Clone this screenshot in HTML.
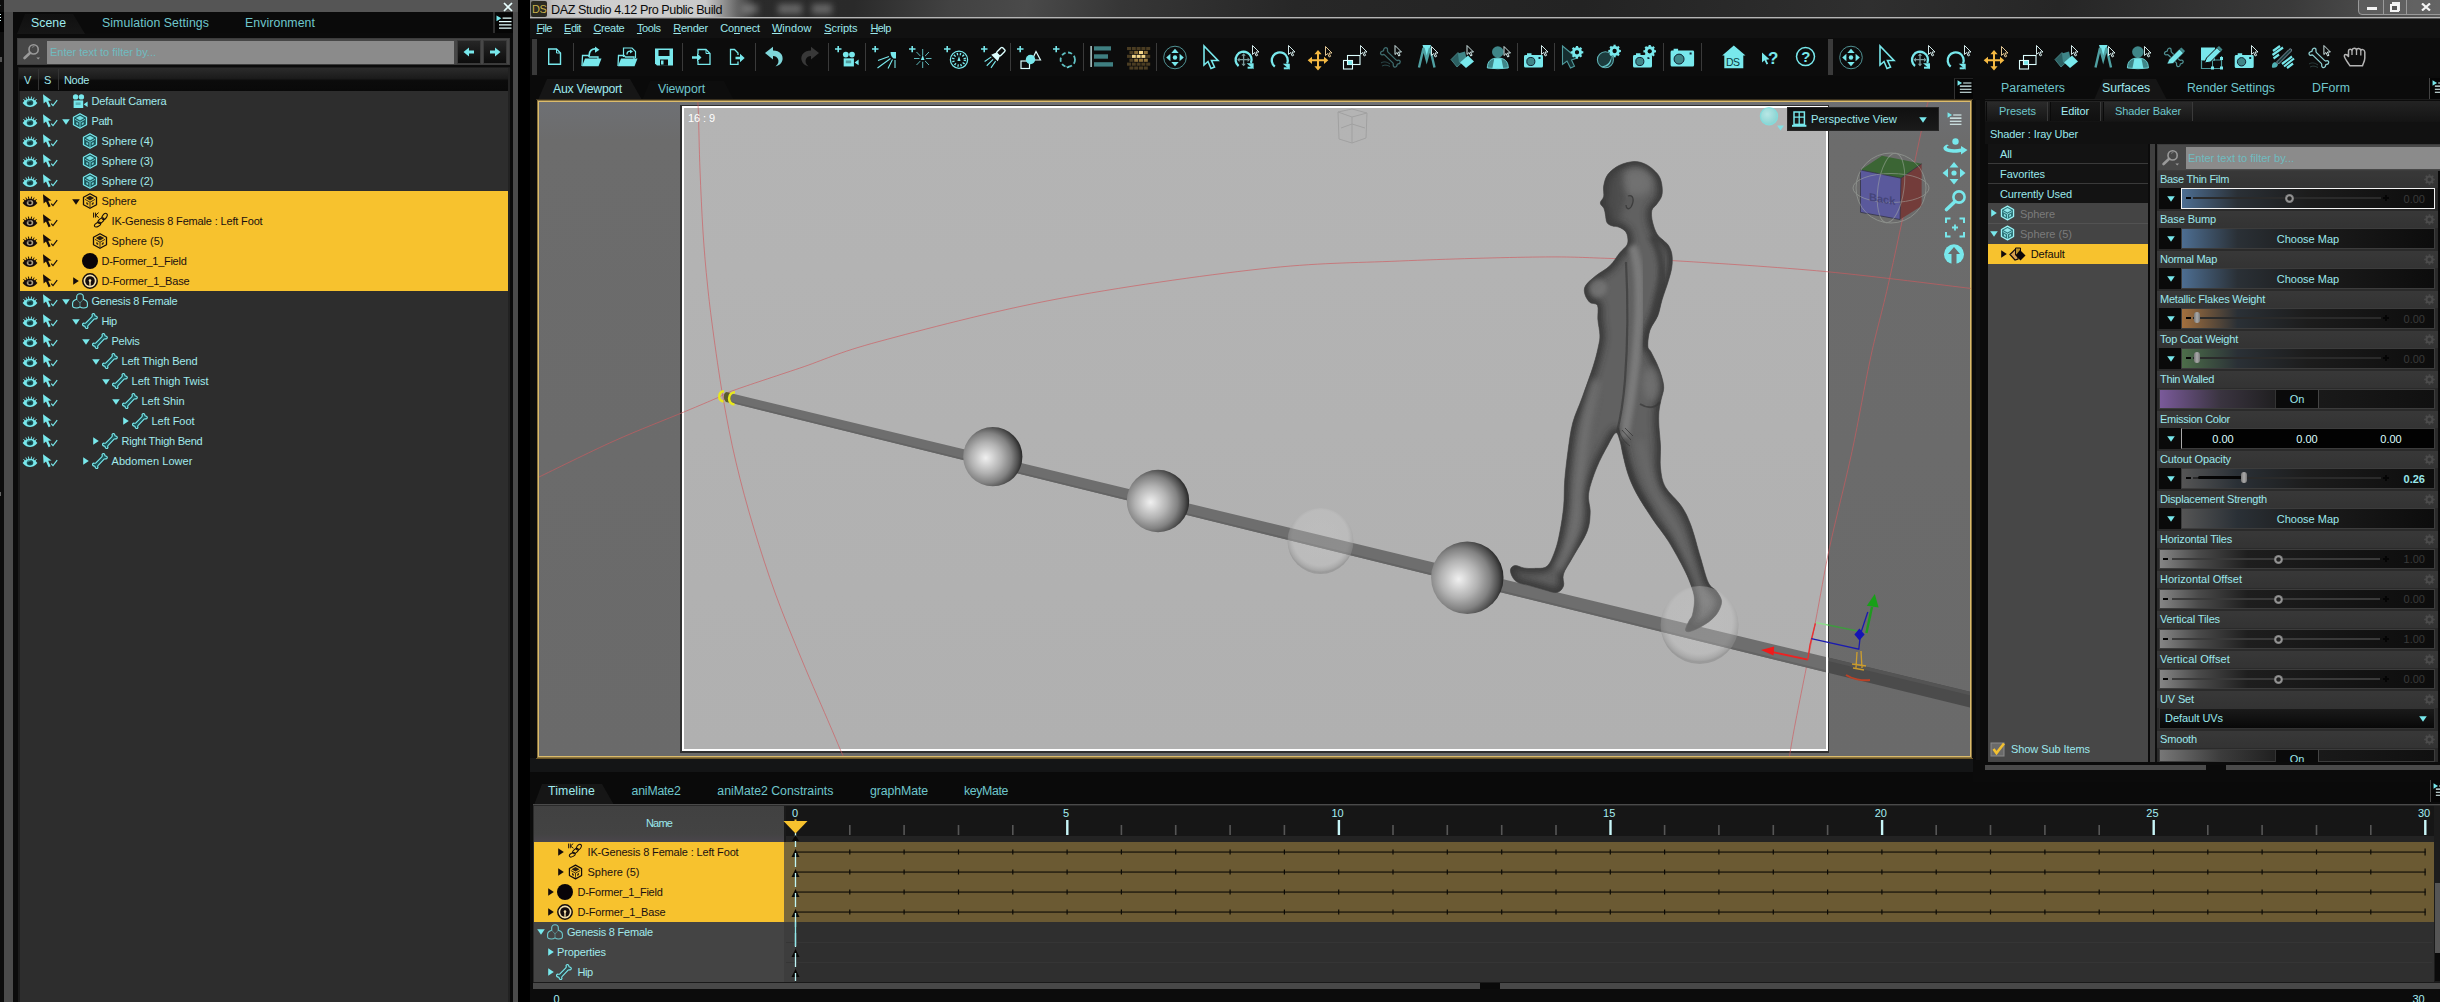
<!DOCTYPE html><html><head><meta charset="utf-8"><title>DAZ Studio</title><style>
html,body{margin:0;padding:0;background:#0a0a0a}
body{width:2440px;height:1002px;position:relative;overflow:hidden;font-family:"Liberation Sans",sans-serif;}
body div,body svg{position:absolute;}
.t{white-space:nowrap;}
u{text-decoration:underline;text-underline-offset:1px}
</style></head><body>

<svg width="0" height="0" style="position:absolute"><defs>
<symbol id="eye" viewBox="0 0 16 12" overflow="visible">
 <g stroke="currentColor" stroke-width="1" fill="none" stroke-linecap="butt">
  <path d="M1.2 3.2L2.8 5.2M3.6 1.6L4.8 4M6.3 0.6L6.8 3.3M9.7 0.6L9.2 3.3M12.4 1.6L11.2 4M14.8 3.2L13.2 5.2"/>
 </g>
 <path d="M0.3 7.2C3 3.6 5.6 2.8 8 2.8C10.4 2.8 13 3.6 15.7 7.2C13 10.6 10.4 11.4 8 11.4C5.6 11.4 3 10.6 0.3 7.2Z" fill="currentColor"/>
 <ellipse cx="8" cy="7" rx="3.400" ry="2.900" fill="var(--k)"/>
 <ellipse cx="8" cy="7.100" rx="1.700" ry="1.600" fill="var(--p,transparent)"/>
 <path d="M5.400 6.400a2.400 2 0 0 1 3.200-1.400" stroke="currentColor" stroke-width="0.900" fill="none" opacity=".8"/>
</symbol>
<symbol id="sel" viewBox="0 0 16 14" overflow="visible">
 <path d="M1 0.2L1.6 9.6L4 7.6L6.6 13.2L8.6 12.2L6.2 6.8L9.6 6.4Z" fill="currentColor"/>
 <path d="M9.2 9.6L11 11.6L15.2 6.2" stroke="currentColor" stroke-width="1.2" fill="none"/>
</symbol>
<symbol id="cube" viewBox="0 0 16 16" overflow="visible">
 <path d="M8 0.700L14.500 4.300V11.700L8 15.300L1.500 11.700V4.300Z" fill="var(--k)" stroke="currentColor" stroke-width="1.300" stroke-linejoin="round"/>
 <path d="M8 2.700L12.200 5.100L8 7.500L3.800 5.100Z" fill="currentColor" opacity=".9"/>
 <path d="M3 6.400L8 9.200L13 6.400M8 9.200V14" fill="none" stroke="currentColor" stroke-width="0.900" opacity=".9"/>
 <path d="M4.300 8.900L6.200 10V12.200L4.300 11.100Z M11.700 8.900L9.800 10V12.200L11.700 11.100Z" fill="currentColor" opacity=".85"/>
</symbol>
<symbol id="bone" viewBox="0 0 16 16" overflow="visible">
 <path d="M2.2 10.2C0.8 10 0 11.4 0.9 12.5C1.7 13.4 2.6 13 2.9 13.3C3.3 13.7 2.8 14.6 3.9 15.3C5.1 16 6.3 14.9 5.8 13.7C5.6 13.1 5.6 12.9 6.2 12.3L12.1 6.2C12.6 5.7 13 5.8 13.6 5.9C14.9 6.1 15.8 4.7 14.9 3.6C14.2 2.8 13.4 3.1 13.1 2.8C12.7 2.4 13.1 1.4 12.1 0.8C10.9 0.1 9.7 1.2 10.2 2.4C10.4 3 10.4 3.2 9.8 3.8L3.9 9.9C3.4 10.4 3 10.3 2.2 10.2Z" fill="var(--k)" stroke="currentColor" stroke-width="1.15" stroke-linejoin="round"/>
</symbol>
<symbol id="cam" viewBox="0 0 16 15" overflow="visible">
 <circle cx="3.6" cy="2.9" r="2.7" fill="currentColor"/><circle cx="9.4" cy="2.9" r="2.7" fill="currentColor"/>
 <rect x="1.6" y="6.4" width="9.6" height="7.6" fill="currentColor"/>
 <path d="M11.8 10.2L15.6 7.6V13L11.8 10.4Z" fill="currentColor"/>
 <rect x="3.6" y="8.4" width="5" height="2.6" fill="var(--k)" opacity=".35"/>
</symbol>
<symbol id="fig" viewBox="0 0 16 16" overflow="visible">
 <path d="M8 0.8C10 0.8 11.3 2 11.3 3.8V6.3C13.6 7 15.4 8.6 15.4 10.3V12.8C15.4 14.2 13.4 15 11.6 15C10.1 15 8.8 14.5 8 13.8C7.2 14.5 5.9 15 4.4 15C2.6 15 0.6 14.2 0.6 12.8V10.3C0.6 8.6 2.4 7 4.7 6.3V3.8C4.7 2 6 0.8 8 0.8Z" fill="var(--k)" stroke="currentColor" stroke-width="1.1" stroke-linejoin="round"/>
 <path d="M4.7 6.3C6 7.6 7.2 8.6 8 10.2C8.8 8.6 10 7.6 11.3 6.3M8 10.2V13.8" fill="none" stroke="currentColor" stroke-width="0.8" opacity=".6"/>
</symbol>
<symbol id="dbase" viewBox="0 0 16 16" overflow="visible">
 <circle cx="8" cy="8" r="7.200" fill="#f3dfa8" stroke="currentColor" stroke-width="1.500"/>
 <circle cx="8" cy="8" r="4.800" fill="currentColor"/>
 <circle cx="8" cy="7.600" r="1.300" fill="#f3dfa8"/><path d="M7.300 8V12.700H8.700V8Z" fill="#f3dfa8"/>
</symbol>
<symbol id="ik" viewBox="0 0 16 16" overflow="visible">
 <path d="M0.4 0.6V5.6M2.4 0.6V5.6M5.6 0.6L2.6 3.2L5.8 5.6" stroke="currentColor" stroke-width="1" fill="none"/>
 <ellipse cx="11.6" cy="4.4" rx="2.1" ry="3.4" transform="rotate(35 11.6 4.4)" fill="none" stroke="currentColor" stroke-width="1.1"/>
 <ellipse cx="8" cy="8.6" rx="1.9" ry="3.6" transform="rotate(50 8 8.6)" fill="none" stroke="currentColor" stroke-width="1.1"/>
 <ellipse cx="4.6" cy="12.6" rx="1.9" ry="3.4" transform="rotate(62 4.6 12.6)" fill="none" stroke="currentColor" stroke-width="1.1"/>
</symbol>
<symbol id="td" viewBox="0 0 8 6" overflow="visible"><path d="M0.2 0.2H7.8L4 5.8Z" fill="currentColor"/></symbol>
<symbol id="tr" viewBox="0 0 6 8" overflow="visible"><path d="M0.2 0.2V7.8L5.8 4Z" fill="currentColor"/></symbol>
<symbol id="menu" viewBox="0 0 16 14" overflow="visible">
 <path d="M0.5 0.4L5.4 3.3L0.5 6.2Z" fill="currentColor"/>
 <path d="M6.6 3.2H15.5M3 6.6H15.5M3 9.9H15.5M3 13.2H15.5" stroke="#e6ffff" stroke-width="1.2"/>
</symbol>
<symbol id="mag" viewBox="0 0 18 18" overflow="visible">
 <circle cx="10.6" cy="6.4" r="4.6" fill="none" stroke="#9a9a9a" stroke-width="1.6"/>
 <path d="M7.2 9.8L1.6 15" stroke="#9a9a9a" stroke-width="2.6" stroke-linecap="round"/>
 <path d="M9 4.6a2.4 2.4 0 0 1 2.4-1" stroke="#8a8a8a" stroke-width="0.8" fill="none"/>
 <path d="M13.4 14.6h3.6l-1.8 2z" fill="#9a9a9a"/>
</symbol>
<symbol id="gear" viewBox="0 0 12 12" overflow="visible">
 <circle cx="6" cy="6" r="3.3" fill="none" stroke="currentColor" stroke-width="2.2"/>
 <path d="M6 0.2V2M6 10V11.8M0.2 6H2M10 6H11.8M1.9 1.9L3.2 3.2M8.8 8.8L10.1 10.1M1.9 10.1L3.2 8.8M8.8 3.2L10.1 1.9" stroke="currentColor" stroke-width="1.8"/>
</symbol>
</defs></svg>
<div style="left:0px;top:0px;width:530px;height:1002px;background:#0a0a0a;"></div>
<div style="left:0px;top:0px;width:4px;height:1002px;background:#0c0c0c;"></div>
<div style="left:4px;top:0px;width:514px;height:1002px;background:#4b4b4b;"></div>
<div style="left:4px;top:0px;width:514px;height:12px;background:#555555;"></div>
<div style="left:518px;top:0px;width:12px;height:1002px;background:#000;"></div>
<div style="left:0px;top:12px;width:4px;height:20px;background:#000;"></div>
<svg style="left:-5px;top:-1px" width="10" height="12"><path d="M0 0L8 8M8 0L0 8" stroke="#dff" stroke-width="1.6" transform="translate(-3,-1)"/></svg>
<div style="left:0px;top:14px;width:1px;height:1px;background:#dff;"></div>
<div style="left:0px;top:17px;width:1px;height:1px;background:#dff;"></div>
<div style="left:0px;top:20px;width:1px;height:1px;background:#dff;"></div>
<div style="left:0px;top:57px;width:2px;height:5px;background:#555;"></div>
<div style="left:0px;top:492px;width:1px;height:4px;background:#666;"></div>
<div style="left:13px;top:12px;width:500px;height:990px;background:#0b0b0b;"></div>
<div style="left:13px;top:12px;width:481px;height:21px;background:#0a0a0a;"></div>
<svg style="left:13px;top:12px" width="110" height="22"><defs><linearGradient id="tabg" x1="0" y1="0" x2="0" y2="1"><stop offset="0" stop-color="#101010"/><stop offset="1" stop-color="#161616"/></linearGradient></defs><path d="M4 22L12 2H60L72 22Z" fill="url(#tabg)"/><path d="M80 22L88 2H210" fill="none"/></svg>
<div class="t" style="left:31px;top:14.8px;font-size:12.3px;color:#9eeaee;line-height:16px;letter-spacing:0.025px;">Scene</div>
<div class="t" style="left:102px;top:14.8px;font-size:12.3px;color:#6fc7cc;line-height:16px;letter-spacing:0.091px;">Simulation Settings</div>
<div class="t" style="left:245px;top:14.8px;font-size:12.3px;color:#6fc7cc;line-height:16px;letter-spacing:0.087px;">Environment</div>
<svg style="left:503px;top:2px" width="10" height="10"><path d="M1 1L9 9M9 1L1 9" stroke="#e8ffff" stroke-width="1.7"/></svg>
<div style="left:493px;top:12px;width:2px;height:21px;background:#2e2e2e;"></div>
<div style="left:495px;top:13px;width:18px;height:20px;background:#050505;"></div>
<svg style="left:496px;top:15px;color:#78e8ec;" width="16" height="14"><use href="#menu"/></svg>
<div style="left:17px;top:38px;width:493px;height:27px;background:#3c3c3c;"></div>
<div style="left:18px;top:39px;width:491px;height:25px;background:#474747;"></div>
<div style="left:47px;top:41px;width:407px;height:23px;background:#8b8b8b;"></div>
<svg style="left:23px;top:43px;color:#78e8ec;" width="18" height="18"><use href="#mag"/></svg>
<div class="t" style="left:50px;top:44.0px;font-size:11px;color:#6fbcc0;line-height:16px;letter-spacing:-0.007px;">Enter text to filter by...</div>
<div style="left:457px;top:40px;width:24px;height:24px;background:linear-gradient(#262626,#0c0c0c);border:1px solid #3a3a3a;box-sizing:border-box;"></div>
<div style="left:483px;top:40px;width:24px;height:24px;background:linear-gradient(#262626,#0c0c0c);border:1px solid #3a3a3a;box-sizing:border-box;"></div>
<svg style="left:463px;top:46px" width="12" height="12"><path d="M0.5 6L6 1.6V4.6H11V7.4H6V10.4Z" fill="#78e8ec"/></svg>
<svg style="left:489px;top:46px" width="12" height="12"><path d="M11.5 6L6 1.6V4.6H1V7.4H6V10.4Z" fill="#78e8ec"/></svg>
<div style="left:18px;top:67px;width:492px;height:935px;background:#1c1c1c;"></div>
<div style="left:19px;top:68px;width:490px;height:23px;background:linear-gradient(#2b2b2b 0%,#1b1b1b 45%,#0b0b0b 55%,#090909 100%);"></div>
<div style="left:38px;top:69px;width:1px;height:21px;background:#333;"></div>
<div style="left:58px;top:69px;width:1px;height:21px;background:#333;"></div>
<div class="t" style="left:24px;top:72.0px;font-size:11px;color:#a2eaec;line-height:16px;">V</div>
<div class="t" style="left:44px;top:72.0px;font-size:11px;color:#a2eaec;line-height:16px;">S</div>
<div class="t" style="left:64px;top:72.0px;font-size:11px;color:#a2eaec;line-height:16px;letter-spacing:-0.324px;">Node</div>
<div style="left:20px;top:91px;width:488px;height:911px;background:#2d2d2d;"></div>
<div style="left:508px;top:68px;width:2px;height:934px;background:#222;"></div>
<div style="left:20px;top:191px;width:488px;height:100px;background:#f7c22e;"></div>
<svg style="left:22px;top:95.5px;color:#78e8ec;--k:#1c4f53;--p:#0e3538;" width="16" height="11.5"><use href="#eye"/></svg>
<svg style="left:42px;top:94px;color:#78e8ec;--k:#1c4f53;" width="16" height="14"><use href="#sel"/></svg>
<svg style="left:72px;top:94px;color:#78e8ec;--k:#1c4f53;" width="16" height="15"><use href="#cam"/></svg>
<div class="t" style="left:91.5px;top:93.0px;font-size:11px;color:#a2eaec;line-height:16px;letter-spacing:-0.146px;">Default Camera</div>
<svg style="left:22px;top:115.5px;color:#78e8ec;--k:#1c4f53;--p:#0e3538;" width="16" height="11.5"><use href="#eye"/></svg>
<svg style="left:42px;top:114px;color:#78e8ec;--k:#1c4f53;" width="16" height="14"><use href="#sel"/></svg>
<svg style="left:62px;top:119px;color:#78e8ec;" width="8" height="6"><use href="#td"/></svg>
<svg style="left:72px;top:113px;color:#78e8ec;--k:#1d5357;" width="16" height="16"><use href="#cube"/></svg>
<div class="t" style="left:91.5px;top:113.0px;font-size:11px;color:#a2eaec;line-height:16px;letter-spacing:-0.410px;">Path</div>
<svg style="left:22px;top:135.5px;color:#78e8ec;--k:#1c4f53;--p:#0e3538;" width="16" height="11.5"><use href="#eye"/></svg>
<svg style="left:42px;top:134px;color:#78e8ec;--k:#1c4f53;" width="16" height="14"><use href="#sel"/></svg>
<svg style="left:82px;top:133px;color:#78e8ec;--k:#1d5357;" width="16" height="16"><use href="#cube"/></svg>
<div class="t" style="left:101.5px;top:133.0px;font-size:11px;color:#a2eaec;line-height:16px;letter-spacing:0.002px;">Sphere (4)</div>
<svg style="left:22px;top:155.5px;color:#78e8ec;--k:#1c4f53;--p:#0e3538;" width="16" height="11.5"><use href="#eye"/></svg>
<svg style="left:42px;top:154px;color:#78e8ec;--k:#1c4f53;" width="16" height="14"><use href="#sel"/></svg>
<svg style="left:82px;top:153px;color:#78e8ec;--k:#1d5357;" width="16" height="16"><use href="#cube"/></svg>
<div class="t" style="left:101.5px;top:153.0px;font-size:11px;color:#a2eaec;line-height:16px;letter-spacing:0.002px;">Sphere (3)</div>
<svg style="left:22px;top:175.5px;color:#78e8ec;--k:#1c4f53;--p:#0e3538;" width="16" height="11.5"><use href="#eye"/></svg>
<svg style="left:42px;top:174px;color:#78e8ec;--k:#1c4f53;" width="16" height="14"><use href="#sel"/></svg>
<svg style="left:82px;top:173px;color:#78e8ec;--k:#1d5357;" width="16" height="16"><use href="#cube"/></svg>
<div class="t" style="left:101.5px;top:173.0px;font-size:11px;color:#a2eaec;line-height:16px;letter-spacing:0.002px;">Sphere (2)</div>
<svg style="left:22px;top:195.5px;color:#140c0c;--k:#a89c84;--p:#0c0808;" width="16" height="11.5"><use href="#eye"/></svg>
<svg style="left:42px;top:194px;color:#140c0c;--k:#f7c22e;" width="16" height="14"><use href="#sel"/></svg>
<svg style="left:72px;top:199px;color:#140c0c;" width="8" height="6"><use href="#td"/></svg>
<svg style="left:82px;top:193px;color:#140c0c;--k:#f7c22e;" width="16" height="16"><use href="#cube"/></svg>
<div class="t" style="left:101.5px;top:193.0px;font-size:11px;color:#1a1010;line-height:16px;letter-spacing:-0.081px;">Sphere</div>
<svg style="left:22px;top:215.5px;color:#140c0c;--k:#a89c84;--p:#0c0808;" width="16" height="11.5"><use href="#eye"/></svg>
<svg style="left:42px;top:214px;color:#140c0c;--k:#f7c22e;" width="16" height="14"><use href="#sel"/></svg>
<svg style="left:93px;top:212px;color:#140c0c;--k:#f7c22e;" width="16" height="16"><use href="#ik"/></svg>
<div class="t" style="left:111.5px;top:213.0px;font-size:11px;color:#1a1010;line-height:16px;letter-spacing:-0.158px;">IK-Genesis 8 Female : Left Foot</div>
<svg style="left:22px;top:235.5px;color:#140c0c;--k:#a89c84;--p:#0c0808;" width="16" height="11.5"><use href="#eye"/></svg>
<svg style="left:42px;top:234px;color:#140c0c;--k:#f7c22e;" width="16" height="14"><use href="#sel"/></svg>
<svg style="left:92px;top:233px;color:#140c0c;--k:#f7c22e;" width="16" height="16"><use href="#cube"/></svg>
<div class="t" style="left:111.5px;top:233.0px;font-size:11px;color:#1a1010;line-height:16px;letter-spacing:0.002px;">Sphere (5)</div>
<svg style="left:22px;top:255.5px;color:#140c0c;--k:#a89c84;--p:#0c0808;" width="16" height="11.5"><use href="#eye"/></svg>
<svg style="left:42px;top:254px;color:#140c0c;--k:#f7c22e;" width="16" height="14"><use href="#sel"/></svg>
<div style="left:82px;top:253px;width:16px;height:16px;border-radius:8px;background:#080408"></div>
<div class="t" style="left:101.5px;top:253.0px;font-size:11px;color:#1a1010;line-height:16px;letter-spacing:-0.266px;">D-Former_1_Field</div>
<svg style="left:22px;top:275.5px;color:#140c0c;--k:#a89c84;--p:#0c0808;" width="16" height="11.5"><use href="#eye"/></svg>
<svg style="left:42px;top:274px;color:#140c0c;--k:#f7c22e;" width="16" height="14"><use href="#sel"/></svg>
<svg style="left:73px;top:277px;color:#140c0c;" width="6" height="8"><use href="#tr"/></svg>
<svg style="left:82px;top:273px;color:#140c0c;--k:#f7c22e;" width="16" height="16"><use href="#dbase"/></svg>
<div class="t" style="left:101.5px;top:273.0px;font-size:11px;color:#1a1010;line-height:16px;letter-spacing:-0.166px;">D-Former_1_Base</div>
<svg style="left:22px;top:295.5px;color:#78e8ec;--k:#1c4f53;--p:#0e3538;" width="16" height="11.5"><use href="#eye"/></svg>
<svg style="left:42px;top:294px;color:#78e8ec;--k:#1c4f53;" width="16" height="14"><use href="#sel"/></svg>
<svg style="left:62px;top:299px;color:#78e8ec;" width="8" height="6"><use href="#td"/></svg>
<svg style="left:72px;top:293px;color:#78e8ec;--k:#2d2d2d;" width="16" height="16"><use href="#fig"/></svg>
<div class="t" style="left:91.5px;top:293.0px;font-size:11px;color:#a2eaec;line-height:16px;letter-spacing:-0.204px;">Genesis 8 Female</div>
<svg style="left:22px;top:315.5px;color:#78e8ec;--k:#1c4f53;--p:#0e3538;" width="16" height="11.5"><use href="#eye"/></svg>
<svg style="left:42px;top:314px;color:#78e8ec;--k:#1c4f53;" width="16" height="14"><use href="#sel"/></svg>
<svg style="left:72px;top:319px;color:#78e8ec;" width="8" height="6"><use href="#td"/></svg>
<svg style="left:82px;top:313px;color:#78e8ec;--k:#1c4f53;" width="16" height="16"><use href="#bone"/></svg>
<div class="t" style="left:101.5px;top:313.0px;font-size:11px;color:#a2eaec;line-height:16px;letter-spacing:-0.505px;">Hip</div>
<svg style="left:22px;top:335.5px;color:#78e8ec;--k:#1c4f53;--p:#0e3538;" width="16" height="11.5"><use href="#eye"/></svg>
<svg style="left:42px;top:334px;color:#78e8ec;--k:#1c4f53;" width="16" height="14"><use href="#sel"/></svg>
<svg style="left:82px;top:339px;color:#78e8ec;" width="8" height="6"><use href="#td"/></svg>
<svg style="left:92px;top:333px;color:#78e8ec;--k:#1c4f53;" width="16" height="16"><use href="#bone"/></svg>
<div class="t" style="left:111.5px;top:333.0px;font-size:11px;color:#a2eaec;line-height:16px;letter-spacing:-0.224px;">Pelvis</div>
<svg style="left:22px;top:355.5px;color:#78e8ec;--k:#1c4f53;--p:#0e3538;" width="16" height="11.5"><use href="#eye"/></svg>
<svg style="left:42px;top:354px;color:#78e8ec;--k:#1c4f53;" width="16" height="14"><use href="#sel"/></svg>
<svg style="left:92px;top:359px;color:#78e8ec;" width="8" height="6"><use href="#td"/></svg>
<svg style="left:102px;top:353px;color:#78e8ec;--k:#1c4f53;" width="16" height="16"><use href="#bone"/></svg>
<div class="t" style="left:121.5px;top:353.0px;font-size:11px;color:#a2eaec;line-height:16px;letter-spacing:-0.098px;">Left Thigh Bend</div>
<svg style="left:22px;top:375.5px;color:#78e8ec;--k:#1c4f53;--p:#0e3538;" width="16" height="11.5"><use href="#eye"/></svg>
<svg style="left:42px;top:374px;color:#78e8ec;--k:#1c4f53;" width="16" height="14"><use href="#sel"/></svg>
<svg style="left:102px;top:379px;color:#78e8ec;" width="8" height="6"><use href="#td"/></svg>
<svg style="left:112px;top:373px;color:#78e8ec;--k:#1c4f53;" width="16" height="16"><use href="#bone"/></svg>
<div class="t" style="left:131.5px;top:373.0px;font-size:11px;color:#a2eaec;line-height:16px;letter-spacing:0.022px;">Left Thigh Twist</div>
<svg style="left:22px;top:395.5px;color:#78e8ec;--k:#1c4f53;--p:#0e3538;" width="16" height="11.5"><use href="#eye"/></svg>
<svg style="left:42px;top:394px;color:#78e8ec;--k:#1c4f53;" width="16" height="14"><use href="#sel"/></svg>
<svg style="left:112px;top:399px;color:#78e8ec;" width="8" height="6"><use href="#td"/></svg>
<svg style="left:122px;top:393px;color:#78e8ec;--k:#1c4f53;" width="16" height="16"><use href="#bone"/></svg>
<div class="t" style="left:141.5px;top:393.0px;font-size:11px;color:#a2eaec;line-height:16px;letter-spacing:-0.047px;">Left Shin</div>
<svg style="left:22px;top:415.5px;color:#78e8ec;--k:#1c4f53;--p:#0e3538;" width="16" height="11.5"><use href="#eye"/></svg>
<svg style="left:42px;top:414px;color:#78e8ec;--k:#1c4f53;" width="16" height="14"><use href="#sel"/></svg>
<svg style="left:123px;top:417px;color:#78e8ec;" width="6" height="8"><use href="#tr"/></svg>
<svg style="left:132px;top:413px;color:#78e8ec;--k:#1c4f53;" width="16" height="16"><use href="#bone"/></svg>
<div class="t" style="left:151.5px;top:413.0px;font-size:11px;color:#a2eaec;line-height:16px;letter-spacing:-0.047px;">Left Foot</div>
<svg style="left:22px;top:435.5px;color:#78e8ec;--k:#1c4f53;--p:#0e3538;" width="16" height="11.5"><use href="#eye"/></svg>
<svg style="left:42px;top:434px;color:#78e8ec;--k:#1c4f53;" width="16" height="14"><use href="#sel"/></svg>
<svg style="left:93px;top:437px;color:#78e8ec;" width="6" height="8"><use href="#tr"/></svg>
<svg style="left:102px;top:433px;color:#78e8ec;--k:#1c4f53;" width="16" height="16"><use href="#bone"/></svg>
<div class="t" style="left:121.5px;top:433.0px;font-size:11px;color:#a2eaec;line-height:16px;letter-spacing:-0.238px;">Right Thigh Bend</div>
<svg style="left:22px;top:455.5px;color:#78e8ec;--k:#1c4f53;--p:#0e3538;" width="16" height="11.5"><use href="#eye"/></svg>
<svg style="left:42px;top:454px;color:#78e8ec;--k:#1c4f53;" width="16" height="14"><use href="#sel"/></svg>
<svg style="left:83px;top:457px;color:#78e8ec;" width="6" height="8"><use href="#tr"/></svg>
<svg style="left:92px;top:453px;color:#78e8ec;--k:#1c4f53;" width="16" height="16"><use href="#bone"/></svg>
<div class="t" style="left:111.5px;top:453.0px;font-size:11px;color:#a2eaec;line-height:16px;letter-spacing:0.069px;">Abdomen Lower</div>
<div style="left:530px;top:0px;width:1910px;height:1002px;background:#0b0b0b;"></div>
<div style="left:530px;top:0px;width:1910px;height:17px;background:linear-gradient(100deg,#3c3c3c 0%,#2b2b2b 11%,#2a2a2a 17%,#424242 22%,#4a4a4a 26%,#363636 31%,#272727 40%,#232323 55%,#2f2f2f 70%,#262626 80%,#3a3a3a 92%,#5a5a5a 100%);"></div>
<div style="left:530px;top:0px;width:225px;height:17px;background:linear-gradient(90deg,rgba(140,140,140,.85) 0%,rgba(200,200,200,.95) 10%,rgba(214,214,214,.96) 30%,rgba(210,210,210,.95) 78%,rgba(190,190,190,.5) 90%,rgba(150,150,150,0) 100%);"></div>
<div style="left:530px;top:17px;width:1910px;height:1px;background:#b5b5b5;"></div>
<div style="left:530px;top:18px;width:1910px;height:1px;background:#555;"></div>
<div style="left:742px;top:4px;width:16px;height:10px;background:rgba(190,190,190,.4);filter:blur(3px);"></div>
<div style="left:778px;top:4px;width:24px;height:10px;background:rgba(190,190,190,.4);filter:blur(3px);"></div>
<div style="left:812px;top:4px;width:20px;height:10px;background:rgba(190,190,190,.4);filter:blur(3px);"></div>
<div style="left:531px;top:1px;width:16px;height:16px;background:#2a2a22;border-radius:2px;"></div>
<div class="t" style="left:532px;top:1.0px;font-size:11px;color:#c8b24a;line-height:16px;letter-spacing:-0.5px;font-weight:normal;">DS</div>
<div class="t" style="left:551px;top:1.5px;font-size:12.6px;color:#0a0a0a;line-height:16px;letter-spacing:-0.432px;">DAZ Studio 4.12 Pro Public Build</div>
<div style="left:2358px;top:-3px;width:90px;height:18px;border:1px solid #9a9a9a;border-radius:4px;box-sizing:border-box;background:rgba(110,110,110,.55)"></div>
<div style="left:2383px;top:0px;width:1px;height:15px;background:#9a9a9a;"></div>
<div style="left:2406px;top:0px;width:1px;height:15px;background:#9a9a9a;"></div>
<div style="left:2367px;top:7px;width:10px;height:3px;background:#f4f4f4;"></div>
<div style="left:2392px;top:2px;width:6px;height:6px;border:1px solid #eee;border-top-width:2px;"></div>
<div style="left:2390px;top:4px;width:5px;height:4px;border:2px solid #f4f4f4;background:#555"></div>
<svg style="left:2421px;top:3px" width="10" height="8"><path d="M1 0.5L9 7.5M9 0.5L1 7.5" stroke="#f4f4f4" stroke-width="2.2"/></svg>
<div style="left:530px;top:19px;width:1910px;height:19px;background:#111111;"></div>
<div class="t" style="left:536.4px;top:20.3px;font-size:11px;color:#9ce8ec;line-height:16px;letter-spacing:-0.562px;"><u>F</u>ile</div>
<div class="t" style="left:564.1px;top:20.3px;font-size:11px;color:#9ce8ec;line-height:16px;letter-spacing:-0.542px;"><u>E</u>dit</div>
<div class="t" style="left:593.4px;top:20.3px;font-size:11px;color:#9ce8ec;line-height:16px;letter-spacing:-0.339px;"><u>C</u>reate</div>
<div class="t" style="left:636.9px;top:20.3px;font-size:11px;color:#9ce8ec;line-height:16px;letter-spacing:-0.417px;"><u>T</u>ools</div>
<div class="t" style="left:673.3px;top:20.3px;font-size:11px;color:#9ce8ec;line-height:16px;letter-spacing:-0.266px;"><u>R</u>ender</div>
<div class="t" style="left:720.3px;top:20.3px;font-size:11px;color:#9ce8ec;line-height:16px;letter-spacing:-0.183px;">Co<u>n</u>nect</div>
<div class="t" style="left:771.9px;top:20.3px;font-size:11px;color:#9ce8ec;line-height:16px;letter-spacing:0.060px;"><u>W</u>indow</div>
<div class="t" style="left:824.2px;top:20.3px;font-size:11px;color:#9ce8ec;line-height:16px;letter-spacing:-0.032px;"><u>S</u>cripts</div>
<div class="t" style="left:870.4px;top:20.3px;font-size:11px;color:#9ce8ec;line-height:16px;letter-spacing:-0.585px;"><u>H</u>elp</div>
<div style="left:530px;top:38px;width:1910px;height:38px;background:#0c0c0c;"></div>
<div style="left:532px;top:39px;width:5px;height:36px;background:#3a3a3a;"></div>
<div style="left:1828px;top:39px;width:5px;height:36px;background:#3a3a3a;"></div>
<div style="left:573px;top:43px;width:1px;height:28px;background:#3a3a3a;"></div>
<div style="left:682px;top:43px;width:1px;height:28px;background:#3a3a3a;"></div>
<div style="left:755px;top:43px;width:1px;height:28px;background:#3a3a3a;"></div>
<div style="left:828px;top:43px;width:1px;height:28px;background:#3a3a3a;"></div>
<div style="left:865px;top:43px;width:1px;height:28px;background:#3a3a3a;"></div>
<div style="left:1010px;top:43px;width:1px;height:28px;background:#3a3a3a;"></div>
<div style="left:1083px;top:43px;width:1px;height:28px;background:#3a3a3a;"></div>
<div style="left:1156px;top:43px;width:1px;height:28px;background:#3a3a3a;"></div>
<div style="left:1517px;top:43px;width:1px;height:28px;background:#3a3a3a;"></div>
<div style="left:1554px;top:43px;width:1px;height:28px;background:#3a3a3a;"></div>
<div style="left:1663px;top:43px;width:1px;height:28px;background:#3a3a3a;"></div>
<div style="left:1701px;top:43px;width:1px;height:28px;background:#3a3a3a;"></div>
<div style="left:530px;top:76px;width:1455px;height:24px;background:#0a0a0a;"></div>
<svg style="left:538px;top:77px" width="260" height="23"><path d="M0 23L9 2H92L104 23Z" fill="#161616"/><path d="M104 23L112 4H186L196 23Z" fill="#0d0d0d"/></svg>
<div class="t" style="left:553px;top:80.7px;font-size:12.3px;color:#9eeaee;line-height:16px;letter-spacing:-0.270px;">Aux Viewport</div>
<div class="t" style="left:658px;top:80.7px;font-size:12.3px;color:#6fc7cc;line-height:16px;letter-spacing:-0.078px;">Viewport</div>
<div style="left:1954px;top:78px;width:20px;height:21px;background:#050505;border-left:1px solid #333;border-top:1px solid #222;"></div>
<svg style="left:1957px;top:80px;color:#78e8ec;" width="15" height="13"><use href="#menu"/></svg>
<div style="left:530px;top:758px;width:1444px;height:14px;background:#141516;"></div>
<div style="left:530px;top:772px;width:1910px;height:10px;background:#0a0a0a;"></div>
<svg style="left:530px;top:38px" width="1910" height="38" viewBox="530 38 1910 38"><path d="M548.700 49H556.500L560.500 53V64.300H548.700Z" fill="none" stroke="#78e8ec" stroke-width="1.400"/><path d="M556.500 49V53H560.500" fill="none" stroke="#78e8ec" stroke-width="1"/><path d="M582 66L582.5 55.5H588L589.5 57H598V59" fill="none" stroke="#78e8ec" stroke-width="1.300"/><path d="M582 66.300L585 58.500H601.5L598.5 66.300Z" fill="#78e8ec"/><path d="M589 56C589 51 592 48.500 596 49" fill="none" stroke="#78e8ec" stroke-width="1.800"/><path d="M595 46.500L599.500 49.800L595 52.800Z" fill="#78e8ec"/><path d="M618 66L618.5 55.5H624L625.5 57H634V59" fill="none" stroke="#78e8ec" stroke-width="1.300"/><path d="M618 66.300L621 58.500H637.5L634.5 66.300Z" fill="#78e8ec"/><path d="M623.500 57V48H632L635.500 51.500V58" fill="none" stroke="#78e8ec" stroke-width="1.200"/><path d="M627 54.500C627 52 628.500 51 630.500 51.200" fill="none" stroke="#78e8ec" stroke-width="1.400"/><path d="M630 49.500L633 51.500L630 53.500Z" fill="#78e8ec"/><path d="M655 48.500H673V65.600H657L655 63.600Z" fill="#78e8ec"/><rect x="658.500" y="50" width="11" height="6" fill="#0c0c0c"/><rect x="660" y="59.500" width="8" height="6.200" fill="#0c0c0c"/><rect x="661" y="60.500" width="2.500" height="4" fill="#78e8ec"/><path d="M698 54V49.500H706L710 53.500V64.300H698V61" fill="none" stroke="#78e8ec" stroke-width="1.300"/><path d="M706 49.500V53.500H710" fill="none" stroke="#78e8ec" stroke-width="1"/><path d="M692 56.300H697V53.300L701.500 57.500L697 61.700V58.700H692Z" fill="#78e8ec"/><path d="M738 55V53L734.500 49.500H730.500V64.300H738V61.500" fill="none" stroke="#78e8ec" stroke-width="1.300"/><path d="M735.500 56.800H740V53.800L744.700 58L740 62.200V59.200H735.500Z" fill="#78e8ec"/><path d="M765 53L773 46.800V50.500C780 50.500 783.500 55 782.500 60C781.800 63.500 779 65.500 775.500 66.400C778.500 64 779 61.500 778 59C777 57 775.500 56 773 56V59.500Z" fill="#7fd6da"/><path d="M819 53L811 46.800V50.500C804 50.500 800.500 55 801.500 60C802.200 63.500 805 65.500 808.500 66.400C805.500 64 805 61.500 806 59C807 57 808.500 56 811 56V59.500Z" fill="#383838"/><path d="M835 49H841.5M838.2 46V52.2" stroke="#78e8ec" stroke-width="1.600"/><g transform="translate(841.500,51.500)" style="color:#78e8ec;--k:#0c0c0c"><use href="#cam" width="18" height="16"/></g><path d="M872 49H878.5M875.2 46V52.2" stroke="#78e8ec" stroke-width="1.600"/><path d="M890.500 52H896V58.500H893.500Q890.500 56 890.500 52Z" fill="#78e8ec"/><path d="M889 56.500L878 60.500M890.500 58.500L877.500 68M892.500 59.500L888 68.500M895 60V68" stroke="#78e8ec" stroke-width="1.100"/><path d="M909 49H915.5M912.2 46V52.2" stroke="#78e8ec" stroke-width="1.600"/><path d="M922.700 49V68M914 58.500H931.500M916.500 52L929 65M929 52L916.500 65" stroke="#5fb8bb" stroke-width="1"/><circle cx="922.700" cy="58.500" r="3.200" fill="#0c0c0c"/><path d="M922.700 55l1.800 5h-3.600z" fill="#78e8ec"/><path d="M944 49H950.5M947.2 46V52.2" stroke="#78e8ec" stroke-width="1.600"/><circle cx="959" cy="59.700" r="8.600" fill="none" stroke="#78e8ec" stroke-width="1.300"/><circle cx="959" cy="59.700" r="5.800" fill="none" stroke="#78e8ec" stroke-width="2.400" stroke-dasharray="1.300 1.750"/><path d="M959 56l1.600 5h-3.200z" fill="#78e8ec"/><path d="M981 49H987.5M984.2 46V52.2" stroke="#78e8ec" stroke-width="1.600"/><g transform="translate(997,55.500) rotate(45)"><rect x="-2.600" y="-9.500" width="5.200" height="8" rx="1.200" fill="none" stroke="#dff" stroke-width="1.400"/><path d="M-2.600 -1.500H2.600L4.600 3.500H-4.600Z" fill="#dff"/><path d="M-3 5L-4.500 13M0 5.500V14.500M3 5L4.500 13" stroke="#78e8ec" stroke-width="1.100"/></g><path d="M1017 49H1023.5M1020.2 46V52.2" stroke="#78e8ec" stroke-width="1.600"/><rect x="1021" y="61" width="8.500" height="7.500" fill="none" stroke="#dff" stroke-width="1.200"/><path d="M1036 51.500L1040.500 60H1032Z" fill="none" stroke="#dff" stroke-width="1.200"/><circle cx="1030.500" cy="59.500" r="4.700" fill="#78e8ec"/><path d="M1053 49H1059.5M1056.2 46V52.2" stroke="#78e8ec" stroke-width="1.600"/><circle cx="1067.800" cy="59.700" r="7.200" fill="none" stroke="#5fc0c3" stroke-width="1.800" stroke-dasharray="4.200 2.600"/><path d="M1067.800 68.500l-1.800 -2h3.600z" fill="#78e8ec"/><rect x="1090.500" y="46" width="1.200" height="21" fill="#dff"/><rect x="1094" y="46.300" width="17" height="4.200" fill="#3f7f81"/><rect x="1094" y="54.300" width="14" height="4.400" fill="#3f7f81"/><rect x="1094" y="62.200" width="19" height="4.400" fill="#3f7f81"/><rect x="1127.0" y="47.0" width="4" height="3.100" fill="#4a3c22"/><rect x="1131.8" y="47.0" width="4" height="3.100" fill="#4a3c22"/><rect x="1136.6" y="47.0" width="4" height="3.100" fill="#4a3c22"/><rect x="1141.4" y="47.0" width="4" height="3.100" fill="#4a3c22"/><rect x="1146.2" y="47.0" width="4" height="3.100" fill="#4a3c22"/><rect x="1129.4" y="50.9" width="4" height="3.100" fill="#4a3c22"/><rect x="1134.2" y="50.9" width="4" height="3.100" fill="#8a6e38"/><rect x="1139.0" y="50.9" width="4" height="3.100" fill="#f3d68a"/><rect x="1143.8" y="50.9" width="4" height="3.100" fill="#8a6e38"/><rect x="1127.0" y="54.8" width="4" height="3.100" fill="#4a3c22"/><rect x="1131.8" y="54.8" width="4" height="3.100" fill="#f3d68a"/><rect x="1136.6" y="54.8" width="4" height="3.100" fill="#f3d68a"/><rect x="1141.4" y="54.8" width="4" height="3.100" fill="#f3d68a"/><rect x="1146.2" y="54.8" width="4" height="3.100" fill="#4a3c22"/><rect x="1129.4" y="58.7" width="4" height="3.100" fill="#4a3c22"/><rect x="1134.2" y="58.7" width="4" height="3.100" fill="#8a6e38"/><rect x="1139.0" y="58.7" width="4" height="3.100" fill="#8a6e38"/><rect x="1143.8" y="58.7" width="4" height="3.100" fill="#8a6e38"/><rect x="1127.0" y="62.6" width="4" height="3.100" fill="#4a3c22"/><rect x="1131.8" y="62.6" width="4" height="3.100" fill="#4a3c22"/><rect x="1136.6" y="62.6" width="4" height="3.100" fill="#4a3c22"/><rect x="1141.4" y="62.6" width="4" height="3.100" fill="#4a3c22"/><rect x="1146.2" y="62.6" width="4" height="3.100" fill="#4a3c22"/><rect x="1129.4" y="66.5" width="4" height="3.100" fill="#4a3c22"/><rect x="1134.2" y="66.5" width="4" height="3.100" fill="#4a3c22"/><rect x="1139.0" y="66.5" width="4" height="3.100" fill="#4a3c22"/><rect x="1143.8" y="66.5" width="4" height="3.100" fill="#4a3c22"/><circle cx="1175" cy="57.5" r="11.300" fill="none" stroke="#4f9092" stroke-width="1"/><circle cx="1175" cy="57.5" r="2.200" fill="#78e8ec"/><path d="M1175 48.7L1178.7 52.9H1171.3ZM1175 66.3L1178.7 62.1H1171.3ZM1166.2 57.5L1170.4 53.8V61.2ZM1183.8 57.5L1179.6 53.8V61.2Z" fill="#78e8ec"/><path transform="translate(1203,45)" d="M1 1V20L5 16.500L8 23.500L11.500 22L8.500 15.500H15Z" fill="#0c0c0c" stroke="#78e8ec" stroke-width="1.600" stroke-linejoin="miter"/><path d="M1238.6 66.0A8 8 0 1 1 1250.8999999999999 63.0" fill="none" stroke="#78e8ec" stroke-width="2.300"/><path d="M1246.6 63.2H1253.6V69.2Z" fill="#78e8ec"/><path d="M1247.6 66.7h5v2h-5z" fill="#78e8ec"/><path d="M1238.1 59.7H1249.1M1243.6 54.2V65.2" stroke="#7a9a9c" stroke-width="1.300"/><path d="M1237.1 59.7l2.500 -2.200v4.400zM1250.1 59.7l-2.500 -2.200v4.400zM1243.6 53.2l-2.200 2.500h4.400zM1243.6 66.2l-2.200 -2.500h4.400z" fill="#7a9a9c"/><path transform="translate(1252,45)" d="M0.500 0.500V9.500L2.600 7.500L4.200 11L5.600 10.300L4 7H7Z" fill="#0c0c0c" stroke="#e6ffff" stroke-width="0.900" stroke-linejoin="miter"/><path d="M1274.8 66.6A8 8 0 1 1 1287.1 63.599999999999994" fill="none" stroke="#78e8ec" stroke-width="2.300"/><path d="M1282.8 63.8H1289.8V69.8Z" fill="#78e8ec"/><path d="M1283.8 67.3h5v2h-5z" fill="#78e8ec"/><path transform="translate(1288,45)" d="M0.500 0.500V9.500L2.600 7.500L4.200 11L5.600 10.300L4 7H7Z" fill="#0c0c0c" stroke="#e6ffff" stroke-width="0.900" stroke-linejoin="miter"/><path d="M1311 60.3H1325M1318 53.3V67.3" stroke="#f5b942" stroke-width="2"/><path d="M1307.7 60.3l4.300 -3.600v7.200zM1328.3 60.3l-4.300 -3.600v7.200zM1318 50.0l-3.600 4.300h7.200zM1318 70.6l-3.600 -4.300h7.200z" fill="#f5b942"/><path transform="translate(1325,46)" d="M0.500 0.500V9.500L2.600 7.500L4.200 11L5.600 10.300L4 7H7Z" fill="#0c0c0c" stroke="#f7d9a0" stroke-width="0.900" stroke-linejoin="miter"/><rect x="1347.5" y="55.5" width="12.500" height="9" fill="none" stroke="#dff" stroke-width="1.100"/><rect x="1343.5" y="60.5" width="9" height="8.500" fill="none" stroke="#dff" stroke-width="1.100"/><rect x="1348.0" y="61.0" width="4" height="3.500" fill="#78e8ec"/><path transform="translate(1360,45)" d="M0.500 0.500V9.500L2.600 7.500L4.200 11L5.600 10.300L4 7H7Z" fill="#0c0c0c" stroke="#e6ffff" stroke-width="0.900" stroke-linejoin="miter"/><path transform="translate(1380,47) scale(1.0) rotate(90 10.500 10.500)" d="M3 13.500C1 13.200 0 15 1.200 16.500C2.200 17.700 3.400 17.200 3.800 17.600C4.300 18.100 3.700 19.300 5.100 20.200C6.700 21.100 8.300 19.700 7.600 18.100C7.300 17.300 7.300 17 8.100 16.200L15.900 8.200C16.600 7.500 17.100 7.600 17.900 7.800C19.600 8 20.800 6.200 19.600 4.700C18.700 3.700 17.600 4.100 17.200 3.700C16.700 3.200 17.200 1.800 15.900 1.100C14.300 0.100 12.700 1.600 13.400 3.200C13.700 4 13.700 4.200 12.900 5L5.100 13C4.400 13.700 3.900 13.600 3 13.500Z" fill="none" stroke="#3f6c6e" stroke-width="1.3"/><path d="M1381 63c3 -2 6 -1 9 1M1382 66c3 -1.500 5 -1 8 0.500" stroke="#2c4a4c" stroke-width="1" fill="none"/><path transform="translate(1394.5,45)" d="M0.500 0.500V9.500L2.600 7.500L4.200 11L5.600 10.300L4 7H7Z" fill="#0c0c0c" stroke="#e6ffff" stroke-width="0.900" stroke-linejoin="miter"/><path d="M1422.5 45H1431L1428 55L1426.7 58L1425.5 55Z" fill="#78e8ec"/><path d="M1419 67.5L1423.5 48L1426.7 60L1430 48L1434.5 67.5" fill="none" stroke="#4fa0a2" stroke-width="2.400" stroke-linejoin="miter"/><path transform="translate(1431,46)" d="M0.500 0.500V9.500L2.600 7.500L4.200 11L5.600 10.300L4 7H7Z" fill="#0c0c0c" stroke="#e6ffff" stroke-width="0.900" stroke-linejoin="miter"/><path d="M1451 59.5L1458 52.5L1464 60.5L1457 67.0Z" fill="#2c6062" stroke="#4f9092" stroke-width="0.800"/><path d="M1458 53.5L1465 51.5L1467 60.5L1459 62.5Z" fill="#3f8688"/><path d="M1460 62.5L1468 55.5L1474 61.5L1466 68.0Z" fill="#78e8ec"/><path transform="translate(1466.5,45)" d="M0.500 0.500V9.500L2.600 7.500L4.200 11L5.600 10.300L4 7H7Z" fill="#0c0c0c" stroke="#e6ffff" stroke-width="0.900" stroke-linejoin="miter"/><circle cx="1497.8" cy="52" r="5.800" fill="#3f8688"/><path d="M1487.3 68C1487.3 61 1491.3 58 1497.8 58C1504.3 58 1508.3 61 1508.3 68Q1497.8 69.5 1487.3 68Z" fill="#3f8688" stroke="#78e8ec" stroke-width="0.800"/><path d="M1492.3 68.5L1494.3 58.5H1501.3L1503.3 68.5Z" fill="#78e8ec"/><path transform="translate(1503.5,46)" d="M0.500 0.500V9.500L2.600 7.500L4.200 11L5.600 10.300L4 7H7Z" fill="#0c0c0c" stroke="#e6ffff" stroke-width="0.900" stroke-linejoin="miter"/><path transform="translate(1524,52.5)" d="M1.500 15Q0 15 0 13.5V4Q0 2.600 1.500 2.600H3V0.800H7.500V2.600H17.5Q19 2.600 19 4V13.5Q19 15 17.5 15Z" fill="#78e8ec"/><circle cx="1530.84" cy="61.5" r="4.050000000000001" fill="#3f8688" stroke="#123" stroke-width="1"/><rect x="1538.5" y="57.0" width="2" height="2" fill="#123"/><path transform="translate(1541,45)" d="M0.500 0.500V9.500L2.600 7.500L4.200 11L5.600 10.300L4 7H7Z" fill="#0c0c0c" stroke="#e6ffff" stroke-width="0.900" stroke-linejoin="miter"/><path d="M1562.500 46V64.500L1567 61L1570.500 68L1574.500 66.200L1571.500 60L1577 58Z" fill="#152e30" stroke="#4f9a9c" stroke-width="1.100"/><circle cx="1577" cy="52.3" r="3.596" fill="none" stroke="#78e8ec" stroke-width="2.9"/><path d="M1581.1 52.3L1583.3 52.3" stroke="#78e8ec" stroke-width="2.200"/><path d="M1579.9 55.2L1581.4 56.7" stroke="#78e8ec" stroke-width="2.200"/><path d="M1577.0 56.4L1577.0 58.6" stroke="#78e8ec" stroke-width="2.200"/><path d="M1574.1 55.2L1572.6 56.7" stroke="#78e8ec" stroke-width="2.200"/><path d="M1572.9 52.3L1570.7 52.3" stroke="#78e8ec" stroke-width="2.200"/><path d="M1574.1 49.4L1572.6 47.9" stroke="#78e8ec" stroke-width="2.200"/><path d="M1577.0 48.2L1577.0 46.0" stroke="#78e8ec" stroke-width="2.200"/><path d="M1579.9 49.4L1581.4 47.9" stroke="#78e8ec" stroke-width="2.200"/><circle cx="1577" cy="52.3" r="1.74" fill="#0c0c0c"/><circle cx="1605.400" cy="59.700" r="8" fill="#1c3c3e" stroke="#5fb0b3" stroke-width="1.100"/><path d="M1611 54.500C1612 60 1608 66 1601 66.500C1606 68.500 1613.500 64 1611 54.500Z" fill="#78e8ec" opacity=".8"/><circle cx="1614.6" cy="51" r="3.596" fill="none" stroke="#78e8ec" stroke-width="2.9"/><path d="M1618.7 51.0L1620.9 51.0" stroke="#78e8ec" stroke-width="2.200"/><path d="M1617.5 53.9L1619.0 55.4" stroke="#78e8ec" stroke-width="2.200"/><path d="M1614.6 55.1L1614.6 57.3" stroke="#78e8ec" stroke-width="2.200"/><path d="M1611.7 53.9L1610.2 55.4" stroke="#78e8ec" stroke-width="2.200"/><path d="M1610.5 51.0L1608.3 51.0" stroke="#78e8ec" stroke-width="2.200"/><path d="M1611.7 48.1L1610.2 46.6" stroke="#78e8ec" stroke-width="2.200"/><path d="M1614.6 46.9L1614.6 44.7" stroke="#78e8ec" stroke-width="2.200"/><path d="M1617.5 48.1L1619.0 46.6" stroke="#78e8ec" stroke-width="2.200"/><circle cx="1614.6" cy="51" r="1.74" fill="#0c0c0c"/><path transform="translate(1633,52.5)" d="M1.500 15Q0 15 0 13.5V4Q0 2.600 1.500 2.600H3V0.800H7.500V2.600H17.5Q19 2.600 19 4V13.5Q19 15 17.5 15Z" fill="#78e8ec"/><circle cx="1639.84" cy="61.5" r="4.050000000000001" fill="#3f8688" stroke="#123" stroke-width="1"/><rect x="1647.5" y="57.0" width="2" height="2" fill="#123"/><circle cx="1649.7" cy="51.3" r="3.596" fill="none" stroke="#78e8ec" stroke-width="2.9"/><path d="M1653.8 51.3L1656.0 51.3" stroke="#78e8ec" stroke-width="2.200"/><path d="M1652.6 54.2L1654.1 55.7" stroke="#78e8ec" stroke-width="2.200"/><path d="M1649.7 55.4L1649.7 57.6" stroke="#78e8ec" stroke-width="2.200"/><path d="M1646.8 54.2L1645.3 55.7" stroke="#78e8ec" stroke-width="2.200"/><path d="M1645.6 51.3L1643.4 51.3" stroke="#78e8ec" stroke-width="2.200"/><path d="M1646.8 48.4L1645.3 46.9" stroke="#78e8ec" stroke-width="2.200"/><path d="M1649.7 47.2L1649.7 45.0" stroke="#78e8ec" stroke-width="2.200"/><path d="M1652.6 48.4L1654.1 46.9" stroke="#78e8ec" stroke-width="2.200"/><circle cx="1649.7" cy="51.3" r="1.74" fill="#0c0c0c"/><path transform="translate(1670.6,48)" d="M1.500 18.5Q0 18.5 0 17.0V4Q0 2.600 1.500 2.600H3V0.800H7.500V2.600H22.0Q23.5 2.600 23.5 4V17.0Q23.5 18.5 22.0 18.5Z" fill="#78e8ec"/><circle cx="1679.06" cy="59.1" r="4.995" fill="#3f8688" stroke="#123" stroke-width="1"/><rect x="1689.6" y="52.5" width="2" height="2" fill="#123"/><path d="M1733.800 45.500L1745.500 55.500H1743.300V68.300H1724.300V55.500H1722.200Z" fill="#78e8ec"/><text x="1726" y="65.500" font-size="10.500" font-family="Liberation Sans" fill="#0c3c40" letter-spacing="-0.600">DS</text><path d="M1762 52.500V62.500L1764.500 60.300L1766.500 64.500L1768.200 63.700L1766.300 59.700L1769.500 59.300Z" fill="#78e8ec"/><text x="1768" y="63.500" font-size="17" font-weight="bold" font-family="Liberation Sans" fill="#78e8ec">?</text><circle cx="1805.500" cy="56.600" r="9" fill="none" stroke="#78e8ec" stroke-width="1.500"/><text x="1801.200" y="62" font-size="15" font-weight="bold" font-family="Liberation Sans" fill="#78e8ec">?</text><circle cx="1851" cy="57.5" r="11.300" fill="none" stroke="#4f9092" stroke-width="1"/><circle cx="1851" cy="57.5" r="2.200" fill="#78e8ec"/><path d="M1851 48.7L1854.7 52.9H1847.3ZM1851 66.3L1854.7 62.1H1847.3ZM1842.2 57.5L1846.4 53.8V61.2ZM1859.8 57.5L1855.6 53.8V61.2Z" fill="#78e8ec"/><path transform="translate(1879,45)" d="M1 1V20L5 16.500L8 23.500L11.500 22L8.500 15.500H15Z" fill="#0c0c0c" stroke="#78e8ec" stroke-width="1.600" stroke-linejoin="miter"/><path d="M1915 66.0A8 8 0 1 1 1927.3 63.0" fill="none" stroke="#78e8ec" stroke-width="2.300"/><path d="M1923 63.2H1930V69.2Z" fill="#78e8ec"/><path d="M1924 66.7h5v2h-5z" fill="#78e8ec"/><path d="M1914.5 59.7H1925.5M1920 54.2V65.2" stroke="#7a9a9c" stroke-width="1.300"/><path d="M1913.5 59.7l2.500 -2.200v4.400zM1926.5 59.7l-2.500 -2.200v4.400zM1920 53.2l-2.200 2.500h4.400zM1920 66.2l-2.200 -2.500h4.400z" fill="#7a9a9c"/><path transform="translate(1928,45)" d="M0.500 0.500V9.500L2.600 7.500L4.200 11L5.600 10.300L4 7H7Z" fill="#0c0c0c" stroke="#e6ffff" stroke-width="0.900" stroke-linejoin="miter"/><path d="M1950.7 66.6A8 8 0 1 1 1963.0 63.599999999999994" fill="none" stroke="#78e8ec" stroke-width="2.300"/><path d="M1958.7 63.8H1965.7V69.8Z" fill="#78e8ec"/><path d="M1959.7 67.3h5v2h-5z" fill="#78e8ec"/><path transform="translate(1964,45)" d="M0.500 0.500V9.500L2.600 7.500L4.200 11L5.600 10.300L4 7H7Z" fill="#0c0c0c" stroke="#e6ffff" stroke-width="0.900" stroke-linejoin="miter"/><path d="M1987 60.3H2001M1994 53.3V67.3" stroke="#f5b942" stroke-width="2"/><path d="M1983.7 60.3l4.300 -3.600v7.200zM2004.3 60.3l-4.300 -3.600v7.200zM1994 50.0l-3.600 4.300h7.200zM1994 70.6l-3.600 -4.300h7.200z" fill="#f5b942"/><path transform="translate(2001,46)" d="M0.500 0.500V9.500L2.600 7.500L4.200 11L5.600 10.300L4 7H7Z" fill="#0c0c0c" stroke="#f7d9a0" stroke-width="0.900" stroke-linejoin="miter"/><rect x="2023.5" y="55.5" width="12.500" height="9" fill="none" stroke="#dff" stroke-width="1.100"/><rect x="2019.5" y="60.5" width="9" height="8.500" fill="none" stroke="#dff" stroke-width="1.100"/><rect x="2024.0" y="61.0" width="4" height="3.500" fill="#78e8ec"/><path transform="translate(2036,45)" d="M0.500 0.500V9.500L2.600 7.500L4.200 11L5.600 10.300L4 7H7Z" fill="#0c0c0c" stroke="#e6ffff" stroke-width="0.900" stroke-linejoin="miter"/><path d="M2055 59.5L2062 52.5L2068 60.5L2061 67.0Z" fill="#2c6062" stroke="#4f9092" stroke-width="0.800"/><path d="M2062 53.5L2069 51.5L2071 60.5L2063 62.5Z" fill="#3f8688"/><path d="M2064 62.5L2072 55.5L2078 61.5L2070 68.0Z" fill="#78e8ec"/><path transform="translate(2071,45)" d="M0.500 0.500V9.500L2.600 7.500L4.200 11L5.600 10.300L4 7H7Z" fill="#0c0c0c" stroke="#e6ffff" stroke-width="0.900" stroke-linejoin="miter"/><path d="M2099.0 45H2107.5L2104.5 55L2103.2 58L2102.0 55Z" fill="#78e8ec"/><path d="M2095.5 67.5L2100.0 48L2103.2 60L2106.5 48L2111.0 67.5" fill="none" stroke="#4fa0a2" stroke-width="2.400" stroke-linejoin="miter"/><path transform="translate(2108,46)" d="M0.500 0.500V9.500L2.600 7.500L4.200 11L5.600 10.300L4 7H7Z" fill="#0c0c0c" stroke="#e6ffff" stroke-width="0.900" stroke-linejoin="miter"/><circle cx="2137.9" cy="52" r="5.800" fill="#3f8688"/><path d="M2127.4 68C2127.4 61 2131.4 58 2137.9 58C2144.4 58 2148.4 61 2148.4 68Q2137.9 69.5 2127.4 68Z" fill="#3f8688" stroke="#78e8ec" stroke-width="0.800"/><path d="M2132.4 68.5L2134.4 58.5H2141.4L2143.4 68.5Z" fill="#78e8ec"/><path transform="translate(2144,46)" d="M0.500 0.500V9.500L2.600 7.500L4.200 11L5.600 10.300L4 7H7Z" fill="#0c0c0c" stroke="#e6ffff" stroke-width="0.900" stroke-linejoin="miter"/><path transform="translate(2164,47.5) scale(0.95) rotate(90 10.500 10.500)" d="M3 13.500C1 13.200 0 15 1.200 16.500C2.200 17.700 3.400 17.200 3.800 17.600C4.300 18.100 3.700 19.300 5.100 20.200C6.700 21.100 8.300 19.700 7.600 18.100C7.300 17.300 7.300 17 8.100 16.200L15.900 8.200C16.600 7.500 17.100 7.600 17.900 7.800C19.600 8 20.800 6.200 19.600 4.700C18.700 3.700 17.600 4.100 17.200 3.700C16.700 3.200 17.200 1.800 15.900 1.100C14.300 0.100 12.700 1.600 13.400 3.200C13.700 4 13.700 4.200 12.900 5L5.100 13C4.400 13.700 3.900 13.600 3 13.500Z" fill="none" stroke="#4f9092" stroke-width="1.3"/><path d="M2167 64L2169 59.500L2179.500 49L2183.500 53L2173 63.500Z" fill="#78e8ec" stroke="#0c0c0c" stroke-width="0.600"/><path d="M2179.500 49L2181.500 47.500L2185 51L2183.500 53Z" fill="#3f8688"/><rect x="2201" y="47.500" width="14" height="13" fill="#78e8ec"/><path d="M2201.500 60V68.500H2221.500V56" fill="none" stroke="#4f9a9c" stroke-width="1.200"/><rect x="2212.500" y="60" width="9" height="8.500" fill="none" stroke="#4f9a9c" stroke-width="1"/><path d="M2204.500 63L2206.500 58L2217 47.500L2221 51.500L2210.500 62Z" fill="#78e8ec" stroke="#0c0c0c" stroke-width="1"/><path d="M2217 47.500L2219 46L2222.500 49.500L2221 51.500Z" fill="#3f8688"/><rect x="2211" y="66.500" width="3" height="3" fill="#78e8ec"/><rect x="2220" y="66.500" width="3" height="3" fill="#78e8ec"/><rect x="2220" y="57" width="3" height="3" fill="#78e8ec"/><path transform="translate(2234.7,52.5)" d="M1.500 15.5Q0 15.5 0 14.0V4Q0 2.600 1.500 2.600H3V0.800H7.500V2.600H17.5Q19 2.600 19 4V14.0Q19 15.5 17.5 15.5Z" fill="#78e8ec"/><circle cx="2241.54" cy="61.8" r="4.1850000000000005" fill="#3f8688" stroke="#123" stroke-width="1"/><rect x="2249.2" y="57.0" width="2" height="2" fill="#123"/><path transform="translate(2251,45)" d="M0.500 0.500V9.500L2.600 7.500L4.200 11L5.600 10.300L4 7H7Z" fill="#0c0c0c" stroke="#e6ffff" stroke-width="0.900" stroke-linejoin="miter"/><path d="M2273 51L2280 46" stroke="#78e8ec" stroke-width="2.200"/><path d="M2272.5 55L2283 47.5" stroke="#78e8ec" stroke-width="2.200"/><path d="M2273.5 58.5L2279 54.5" stroke="#78e8ec" stroke-width="2.200"/><path d="M2282 64L2292 56.5" stroke="#78e8ec" stroke-width="2.200"/><path d="M2284 66.5L2294 58.5" stroke="#78e8ec" stroke-width="2.200"/><path d="M2287 68L2293 63.5" stroke="#78e8ec" stroke-width="2.200"/><path d="M2272 67.500C2271.500 64 2273.500 61.500 2276 62.500L2278 64.500C2277.500 67 2275 68.500 2272 67.500Z" fill="#4fb0b3"/><path d="M2276.500 62L2289 49.500C2291 48 2292.500 49.500 2291 51.500L2278.500 64Z" fill="#1c3c3e" stroke="#9ab" stroke-width="0.800"/><path transform="translate(2308.5,47.5) scale(1.0) rotate(90 10.500 10.500)" d="M3 13.500C1 13.200 0 15 1.200 16.500C2.200 17.700 3.400 17.200 3.800 17.600C4.300 18.100 3.700 19.300 5.100 20.200C6.700 21.100 8.300 19.700 7.600 18.100C7.300 17.300 7.300 17 8.100 16.200L15.900 8.200C16.600 7.500 17.100 7.600 17.900 7.800C19.600 8 20.800 6.200 19.600 4.700C18.700 3.700 17.600 4.100 17.200 3.700C16.700 3.200 17.200 1.800 15.900 1.100C14.300 0.100 12.700 1.600 13.400 3.200C13.700 4 13.700 4.200 12.900 5L5.100 13C4.400 13.700 3.900 13.600 3 13.500Z" fill="none" stroke="#8fd0d2" stroke-width="1.3"/><path d="M2309 64c3 -2 6 -1 9 1M2310 67c3 -1.500 5 -1 8 0.500" stroke="#2a3c3c" stroke-width="1" fill="none"/><path transform="translate(2323.4,45)" d="M0.500 0.500V9.500L2.600 7.500L4.200 11L5.600 10.300L4 7H7Z" fill="#0c0c0c" stroke="#e6ffff" stroke-width="0.900" stroke-linejoin="miter"/><path d="M2350 65.800C2347.500 62 2344.500 58.500 2344.300 56C2344.300 54 2346.500 53.500 2348.500 56.500V51C2348.500 48.800 2351.500 48.800 2352 50.500C2352.500 47.500 2356 47.500 2356.500 50C2357 47.800 2360.500 48 2360.800 50.500C2361.500 49 2364.500 49.200 2364.800 52V58C2364.800 61.500 2363 63.500 2362.500 65.800Z" fill="none" stroke="#b4b4b4" stroke-width="1.500" stroke-linejoin="round"/><path d="M2352 50.500V55M2356.500 50V55M2360.800 50.500V55.500" stroke="#b4b4b4" stroke-width="1.300"/></svg>
<div style="left:537px;top:100px;width:1435px;height:658px;background:#6b6b6b;box-sizing:border-box;border:1px solid #8a7440;box-shadow:inset 0 0 0 1px #dcbc6c;background:linear-gradient(#6e7074 0,#6c6c6c 6%,#6a6a6a 100%);"></div>
<div style="left:536px;top:99px;width:1437px;height:1px;background:#3a3120;"></div>
<div style="left:536px;top:758px;width:1437px;height:1px;background:#6b5526;"></div>
<div style="left:680px;top:105px;width:1149px;height:648px;background:#2f2f2f;"></div>
<div style="left:682px;top:106px;width:1146px;height:645px;background:#ffffff;"></div>
<div style="left:684px;top:108px;width:1142px;height:641px;background:linear-gradient(#b4b4b4,#b0b0b0);"></div>
<svg style="left:537px;top:100px" width="1435" height="658" viewBox="537 100 1435 658"><defs><radialGradient id="sph" cx="40%" cy="52%" r="62%" fx="38%" fy="52%"><stop offset="0" stop-color="#f0f0f0"/><stop offset=".14" stop-color="#dcdcdc"/><stop offset=".42" stop-color="#b2b2b2"/><stop offset=".68" stop-color="#828282"/><stop offset=".86" stop-color="#4e4e4e"/><stop offset=".96" stop-color="#2a2a2a"/><stop offset="1" stop-color="#1a1a1a"/></radialGradient><radialGradient id="gho" cx="50%" cy="45%" r="52%"><stop offset="0" stop-color="#dadada" stop-opacity=".28"/><stop offset=".8" stop-color="#d0d0d0" stop-opacity=".32"/><stop offset=".96" stop-color="#9a9a9a" stop-opacity=".45"/><stop offset="1" stop-color="#8c8c8c" stop-opacity=".6"/></radialGradient><linearGradient id="figg" x1="0" y1="0" x2="1" y2="0"><stop offset="0" stop-color="#747474"/><stop offset=".45" stop-color="#7e7e7e"/><stop offset="1" stop-color="#5a5a5a"/></linearGradient><linearGradient id="pipe" gradientUnits="userSpaceOnUse" x1="0" y1="-6" x2="0" y2="6"><stop offset="0" stop-color="#858585"/><stop offset=".35" stop-color="#747474"/><stop offset="1" stop-color="#5e5e5e"/></linearGradient><filter id="bl1" x="-20%" y="-20%" width="140%" height="140%"><feGaussianBlur stdDeviation="0.7"/></filter><filter id="bl2" x="-20%" y="-20%" width="140%" height="140%"><feGaussianBlur stdDeviation="2"/></filter><filter id="bl3" x="-20%" y="-20%" width="140%" height="140%"><feGaussianBlur stdDeviation="3.5"/></filter><clipPath id="inF"><rect x="684" y="108" width="1142" height="641"/></clipPath><clipPath id="outR"><rect x="1828" y="102" width="142" height="654"/></clipPath><clipPath id="figc"><path d="M1633.8 161.5 C1638.1 161.2 1641.7 162.6 1645.0 164.0 C1648.3 165.4 1651.3 167.8 1653.7 170.0 C1656.1 172.2 1658.1 174.3 1659.5 177.0 C1660.9 179.7 1661.6 182.8 1662.0 186.0 C1662.4 189.2 1662.6 192.9 1661.7 196.0 C1660.8 199.1 1658.2 202.1 1656.5 204.5 C1654.8 206.9 1652.5 207.6 1651.8 210.5 C1651.1 213.4 1651.6 218.0 1652.5 221.9 C1653.4 225.8 1655.2 231.0 1657.0 234.0 C1658.8 237.0 1661.0 238.0 1663.0 240.0 C1665.0 242.0 1667.2 243.3 1668.7 245.8 C1670.2 248.3 1671.5 251.3 1672.0 255.0 C1672.5 258.7 1672.4 263.5 1671.7 268.0 C1671.0 272.5 1669.6 276.7 1668.0 282.0 C1666.4 287.3 1663.7 294.3 1662.0 300.0 C1660.3 305.7 1659.7 311.0 1657.7 316.0 C1655.7 321.0 1651.7 325.0 1650.0 330.0 C1648.3 335.0 1647.6 342.3 1647.8 346.0 C1648.0 349.7 1649.5 349.0 1651.0 352.0 C1652.5 355.0 1655.2 360.0 1657.0 364.0 C1658.8 368.0 1660.4 372.0 1661.5 376.0 C1662.6 380.0 1663.8 384.0 1663.7 388.0 C1663.6 392.0 1661.8 396.0 1661.0 400.0 C1660.2 404.0 1659.2 407.7 1658.9 412.0 C1658.6 416.3 1658.6 420.3 1658.9 426.0 C1659.2 431.7 1660.2 439.0 1660.5 446.0 C1660.8 453.0 1659.7 461.2 1660.5 468.0 C1661.3 474.8 1661.8 480.7 1665.3 487.0 C1668.8 493.3 1677.0 499.6 1681.3 506.0 C1685.6 512.4 1687.7 516.8 1690.9 525.3 C1694.1 533.8 1697.5 547.7 1700.4 557.3 C1703.3 566.9 1705.7 577.2 1708.4 582.8 C1711.1 588.4 1714.2 588.0 1716.4 591.0 C1718.6 594.0 1721.3 597.5 1721.6 601.0 C1721.9 604.5 1719.8 608.8 1718.0 612.0 C1716.2 615.2 1713.9 617.5 1711.0 620.0 C1708.1 622.5 1703.9 625.1 1700.4 627.0 C1696.9 628.9 1692.5 631.0 1690.0 631.5 C1687.5 632.0 1685.7 631.8 1685.5 630.0 C1685.3 628.2 1687.8 623.5 1689.0 621.0 C1690.2 618.5 1691.6 618.3 1692.5 614.8 C1693.4 611.3 1694.6 604.5 1694.5 600.0 C1694.4 595.5 1693.7 593.0 1692.0 588.0 C1690.3 583.0 1688.4 577.8 1684.5 570.0 C1680.6 562.2 1673.8 549.8 1668.5 541.3 C1663.2 532.8 1657.8 526.9 1652.5 518.9 C1647.2 510.9 1640.6 500.9 1636.5 493.4 C1632.4 485.9 1630.2 480.4 1628.0 474.0 C1625.8 467.6 1624.3 460.5 1623.0 455.0 C1621.7 449.5 1621.2 444.7 1620.0 441.0 C1618.8 437.3 1617.8 432.0 1615.8 432.7 C1613.8 433.4 1611.0 439.5 1607.8 445.4 C1604.6 451.2 1599.8 459.8 1596.6 467.8 C1593.4 475.8 1589.7 485.9 1588.6 493.4 C1587.5 500.8 1590.5 506.1 1590.2 512.5 C1589.9 518.9 1589.9 524.2 1587.0 531.7 C1584.1 539.2 1576.6 550.2 1572.7 557.3 C1568.8 564.3 1565.0 569.2 1563.5 574.0 C1562.0 578.8 1564.6 582.9 1563.5 586.0 C1562.4 589.1 1560.1 591.8 1557.0 592.5 C1553.9 593.2 1549.3 591.1 1545.0 590.0 C1540.7 588.9 1535.5 587.2 1531.0 586.0 C1526.5 584.8 1521.1 584.0 1518.0 582.5 C1514.9 581.0 1513.8 579.2 1512.5 577.0 C1511.2 574.8 1510.1 571.4 1510.5 569.5 C1510.9 567.6 1512.8 565.8 1515.0 565.5 C1517.2 565.2 1520.8 567.5 1524.0 568.0 C1527.2 568.5 1530.5 568.7 1534.3 568.4 C1538.1 568.1 1543.5 569.1 1547.0 566.2 C1550.5 563.3 1552.8 556.6 1555.0 550.9 C1557.2 545.1 1558.5 539.2 1559.9 531.7 C1561.4 524.2 1562.9 514.5 1563.7 506.0 C1564.5 497.5 1564.0 489.6 1564.7 480.6 C1565.4 471.6 1566.6 461.4 1567.9 451.8 C1569.2 442.2 1570.3 432.1 1572.7 423.0 C1575.1 413.9 1578.8 407.1 1582.2 397.5 C1585.7 387.9 1590.7 374.2 1593.4 365.6 C1596.1 357.0 1597.4 351.1 1598.5 346.0 C1599.6 340.9 1600.0 339.4 1599.9 335.0 C1599.8 330.6 1598.3 324.6 1597.9 319.7 C1597.5 314.8 1598.8 308.4 1597.5 305.5 C1596.2 302.6 1592.1 304.3 1590.0 302.5 C1587.9 300.7 1585.8 297.3 1585.0 294.5 C1584.2 291.7 1583.7 288.8 1585.5 285.7 C1587.3 282.6 1591.9 279.0 1595.9 275.7 C1600.0 272.4 1605.8 269.6 1609.8 265.8 C1613.8 262.0 1616.9 256.3 1619.8 252.8 C1622.7 249.3 1625.7 247.5 1627.0 245.0 C1628.3 242.5 1628.0 240.2 1627.8 238.0 C1627.5 235.8 1627.0 233.3 1625.5 231.5 C1624.0 229.7 1621.3 228.1 1619.0 227.2 C1616.7 226.2 1613.8 226.6 1611.8 225.8 C1609.8 225.0 1608.1 224.4 1607.0 222.5 C1605.9 220.6 1605.9 216.8 1605.4 214.5 C1604.9 212.2 1604.8 210.4 1604.0 208.5 C1603.2 206.6 1600.3 205.0 1600.3 203.0 C1600.2 201.0 1603.1 199.3 1603.7 196.5 C1604.3 193.7 1603.0 189.7 1603.7 186.0 C1604.4 182.3 1605.2 177.9 1607.8 174.5 C1610.3 171.1 1614.7 167.7 1619.0 165.5 C1623.3 163.3 1629.5 161.8 1633.8 161.5Z"/></clipPath></defs><path d="M697.8 102.0 C697.9 103.8 698.0 101.7 698.4 113.0 C698.8 124.3 699.2 150.2 700.0 170.0 C700.8 189.8 701.8 212.6 703.0 231.8 C704.2 251.0 705.8 268.5 707.5 285.0 C709.2 301.5 710.5 312.0 713.0 330.6 C715.5 349.2 719.0 374.4 722.8 396.4 C726.6 418.3 730.8 440.3 736.0 462.3 C741.2 484.3 747.2 506.3 753.8 528.2 C760.4 550.2 767.5 572.0 775.5 594.0 C783.5 616.0 792.8 638.0 801.9 660.0 C811.0 682.0 823.9 711.0 830.2 725.8 C836.6 740.6 837.8 743.9 840.0 748.9 C842.2 753.9 842.7 754.8 843.2 756.0" fill="none" stroke="#cf5a5e" stroke-width="0.9" opacity=".72"/><path d="M539.0 477.0 C551.5 471.0 589.8 451.9 614.0 441.0 C638.2 430.1 667.0 419.1 684.2 411.9 C701.4 404.7 708.7 401.6 717.0 398.0 C725.3 394.4 720.1 395.3 733.9 390.3 C747.7 385.3 775.6 376.2 799.8 368.1 C824.0 360.0 836.6 352.9 879.0 341.5 C921.4 330.1 990.5 311.7 1054.0 299.6 C1117.5 287.5 1202.4 275.4 1260.0 269.0 C1317.6 262.6 1353.1 263.0 1399.7 261.0 C1446.3 259.0 1504.5 257.4 1539.4 257.0 C1574.3 256.6 1585.7 257.7 1609.0 258.4 C1632.3 259.1 1642.9 258.8 1679.0 261.0 C1715.1 263.2 1777.2 267.0 1825.8 271.6 C1874.4 276.2 1946.6 285.6 1970.8 288.4" fill="none" stroke="#cf5a5e" stroke-width="0.9" opacity=".72"/><path d="M1928.0 102.0 C1927.0 106.3 1928.4 98.6 1922.0 128.0 C1915.6 157.4 1898.1 240.6 1889.6 278.6 C1881.1 316.6 1877.3 327.0 1871.0 355.8 C1864.7 384.6 1858.9 419.7 1852.0 451.6 C1845.1 483.5 1835.7 519.0 1829.6 547.4 C1823.5 575.8 1821.0 593.2 1815.4 622.0 C1809.8 650.8 1800.2 697.7 1795.9 720.0 C1791.6 742.3 1790.6 750.0 1789.5 756.0" fill="none" stroke="#cf5a5e" stroke-width="0.9" opacity=".72"/><g clip-path="url(#inF)"><path d="M731.0 393.2 L1830.0 658.0 L1830.0 673.3 L731.0 402.8Z" fill="#6e6e6e"/><path d="M731.0 401.2 L1830.0 671.2 L1830.0 673.3 L731.0 402.8Z" fill="#646464"/></g><g clip-path="url(#outR)"><path d="M1820.0 655.5 L1972.0 692.3 L1972.0 708.1 L1820.0 670.8Z" fill="#4b4b4b"/><path d="M1820.0 655.5 L1972.0 692.3 L1972.0 695.7 L1820.0 659.0Z" fill="#545454"/></g><path d="M724 391.2C718 391.500 717.500 401 723.500 401.500" fill="none" stroke="#e8e81c" stroke-width="2.400"/><path d="M726 392C723 394 723 399 726 402L731 403L731 393Z" fill="#5c5c30"/><path d="M735 392.200C727.500 392.500 727 404 734.500 404.500" fill="none" stroke="#e8e81c" stroke-width="2.600"/><circle cx="1320.5" cy="541" r="33" fill="url(#gho)"/><circle cx="992.8" cy="456.7" r="29.6" fill="url(#sph)"/><circle cx="1158" cy="501" r="31.2" fill="url(#sph)"/><circle cx="1467.3" cy="577.7" r="36.2" fill="url(#sph)"/><path d="M1633.8 161.5 C1638.1 161.2 1641.7 162.6 1645.0 164.0 C1648.3 165.4 1651.3 167.8 1653.7 170.0 C1656.1 172.2 1658.1 174.3 1659.5 177.0 C1660.9 179.7 1661.6 182.8 1662.0 186.0 C1662.4 189.2 1662.6 192.9 1661.7 196.0 C1660.8 199.1 1658.2 202.1 1656.5 204.5 C1654.8 206.9 1652.5 207.6 1651.8 210.5 C1651.1 213.4 1651.6 218.0 1652.5 221.9 C1653.4 225.8 1655.2 231.0 1657.0 234.0 C1658.8 237.0 1661.0 238.0 1663.0 240.0 C1665.0 242.0 1667.2 243.3 1668.7 245.8 C1670.2 248.3 1671.5 251.3 1672.0 255.0 C1672.5 258.7 1672.4 263.5 1671.7 268.0 C1671.0 272.5 1669.6 276.7 1668.0 282.0 C1666.4 287.3 1663.7 294.3 1662.0 300.0 C1660.3 305.7 1659.7 311.0 1657.7 316.0 C1655.7 321.0 1651.7 325.0 1650.0 330.0 C1648.3 335.0 1647.6 342.3 1647.8 346.0 C1648.0 349.7 1649.5 349.0 1651.0 352.0 C1652.5 355.0 1655.2 360.0 1657.0 364.0 C1658.8 368.0 1660.4 372.0 1661.5 376.0 C1662.6 380.0 1663.8 384.0 1663.7 388.0 C1663.6 392.0 1661.8 396.0 1661.0 400.0 C1660.2 404.0 1659.2 407.7 1658.9 412.0 C1658.6 416.3 1658.6 420.3 1658.9 426.0 C1659.2 431.7 1660.2 439.0 1660.5 446.0 C1660.8 453.0 1659.7 461.2 1660.5 468.0 C1661.3 474.8 1661.8 480.7 1665.3 487.0 C1668.8 493.3 1677.0 499.6 1681.3 506.0 C1685.6 512.4 1687.7 516.8 1690.9 525.3 C1694.1 533.8 1697.5 547.7 1700.4 557.3 C1703.3 566.9 1705.7 577.2 1708.4 582.8 C1711.1 588.4 1714.2 588.0 1716.4 591.0 C1718.6 594.0 1721.3 597.5 1721.6 601.0 C1721.9 604.5 1719.8 608.8 1718.0 612.0 C1716.2 615.2 1713.9 617.5 1711.0 620.0 C1708.1 622.5 1703.9 625.1 1700.4 627.0 C1696.9 628.9 1692.5 631.0 1690.0 631.5 C1687.5 632.0 1685.7 631.8 1685.5 630.0 C1685.3 628.2 1687.8 623.5 1689.0 621.0 C1690.2 618.5 1691.6 618.3 1692.5 614.8 C1693.4 611.3 1694.6 604.5 1694.5 600.0 C1694.4 595.5 1693.7 593.0 1692.0 588.0 C1690.3 583.0 1688.4 577.8 1684.5 570.0 C1680.6 562.2 1673.8 549.8 1668.5 541.3 C1663.2 532.8 1657.8 526.9 1652.5 518.9 C1647.2 510.9 1640.6 500.9 1636.5 493.4 C1632.4 485.9 1630.2 480.4 1628.0 474.0 C1625.8 467.6 1624.3 460.5 1623.0 455.0 C1621.7 449.5 1621.2 444.7 1620.0 441.0 C1618.8 437.3 1617.8 432.0 1615.8 432.7 C1613.8 433.4 1611.0 439.5 1607.8 445.4 C1604.6 451.2 1599.8 459.8 1596.6 467.8 C1593.4 475.8 1589.7 485.9 1588.6 493.4 C1587.5 500.8 1590.5 506.1 1590.2 512.5 C1589.9 518.9 1589.9 524.2 1587.0 531.7 C1584.1 539.2 1576.6 550.2 1572.7 557.3 C1568.8 564.3 1565.0 569.2 1563.5 574.0 C1562.0 578.8 1564.6 582.9 1563.5 586.0 C1562.4 589.1 1560.1 591.8 1557.0 592.5 C1553.9 593.2 1549.3 591.1 1545.0 590.0 C1540.7 588.9 1535.5 587.2 1531.0 586.0 C1526.5 584.8 1521.1 584.0 1518.0 582.5 C1514.9 581.0 1513.8 579.2 1512.5 577.0 C1511.2 574.8 1510.1 571.4 1510.5 569.5 C1510.9 567.6 1512.8 565.8 1515.0 565.5 C1517.2 565.2 1520.8 567.5 1524.0 568.0 C1527.2 568.5 1530.5 568.7 1534.3 568.4 C1538.1 568.1 1543.5 569.1 1547.0 566.2 C1550.5 563.3 1552.8 556.6 1555.0 550.9 C1557.2 545.1 1558.5 539.2 1559.9 531.7 C1561.4 524.2 1562.9 514.5 1563.7 506.0 C1564.5 497.5 1564.0 489.6 1564.7 480.6 C1565.4 471.6 1566.6 461.4 1567.9 451.8 C1569.2 442.2 1570.3 432.1 1572.7 423.0 C1575.1 413.9 1578.8 407.1 1582.2 397.5 C1585.7 387.9 1590.7 374.2 1593.4 365.6 C1596.1 357.0 1597.4 351.1 1598.5 346.0 C1599.6 340.9 1600.0 339.4 1599.9 335.0 C1599.8 330.6 1598.3 324.6 1597.9 319.7 C1597.5 314.8 1598.8 308.4 1597.5 305.5 C1596.2 302.6 1592.1 304.3 1590.0 302.5 C1587.9 300.7 1585.8 297.3 1585.0 294.5 C1584.2 291.7 1583.7 288.8 1585.5 285.7 C1587.3 282.6 1591.9 279.0 1595.9 275.7 C1600.0 272.4 1605.8 269.6 1609.8 265.8 C1613.8 262.0 1616.9 256.3 1619.8 252.8 C1622.7 249.3 1625.7 247.5 1627.0 245.0 C1628.3 242.5 1628.0 240.2 1627.8 238.0 C1627.5 235.8 1627.0 233.3 1625.5 231.5 C1624.0 229.7 1621.3 228.1 1619.0 227.2 C1616.7 226.2 1613.8 226.6 1611.8 225.8 C1609.8 225.0 1608.1 224.4 1607.0 222.5 C1605.9 220.6 1605.9 216.8 1605.4 214.5 C1604.9 212.2 1604.8 210.4 1604.0 208.5 C1603.2 206.6 1600.3 205.0 1600.3 203.0 C1600.2 201.0 1603.1 199.3 1603.7 196.5 C1604.3 193.7 1603.0 189.7 1603.7 186.0 C1604.4 182.3 1605.2 177.9 1607.8 174.5 C1610.3 171.1 1614.7 167.7 1619.0 165.5 C1623.3 163.3 1629.5 161.8 1633.8 161.5Z" fill="#616161"/><g clip-path="url(#figc)"><path d="M1633.8 161.5 C1638.1 161.2 1641.7 162.6 1645.0 164.0 C1648.3 165.4 1651.3 167.8 1653.7 170.0 C1656.1 172.2 1658.1 174.3 1659.5 177.0 C1660.9 179.7 1661.6 182.8 1662.0 186.0 C1662.4 189.2 1662.6 192.9 1661.7 196.0 C1660.8 199.1 1658.2 202.1 1656.5 204.5 C1654.8 206.9 1652.5 207.6 1651.8 210.5 C1651.1 213.4 1651.6 218.0 1652.5 221.9 C1653.4 225.8 1655.2 231.0 1657.0 234.0 C1658.8 237.0 1661.0 238.0 1663.0 240.0 C1665.0 242.0 1667.2 243.3 1668.7 245.8 C1670.2 248.3 1671.5 251.3 1672.0 255.0 C1672.5 258.7 1672.4 263.5 1671.7 268.0 C1671.0 272.5 1669.6 276.7 1668.0 282.0 C1666.4 287.3 1663.7 294.3 1662.0 300.0 C1660.3 305.7 1659.7 311.0 1657.7 316.0 C1655.7 321.0 1651.7 325.0 1650.0 330.0 C1648.3 335.0 1647.6 342.3 1647.8 346.0 C1648.0 349.7 1649.5 349.0 1651.0 352.0 C1652.5 355.0 1655.2 360.0 1657.0 364.0 C1658.8 368.0 1660.4 372.0 1661.5 376.0 C1662.6 380.0 1663.8 384.0 1663.7 388.0 C1663.6 392.0 1661.8 396.0 1661.0 400.0 C1660.2 404.0 1659.2 407.7 1658.9 412.0 C1658.6 416.3 1658.6 420.3 1658.9 426.0 C1659.2 431.7 1660.2 439.0 1660.5 446.0 C1660.8 453.0 1659.7 461.2 1660.5 468.0 C1661.3 474.8 1661.8 480.7 1665.3 487.0 C1668.8 493.3 1677.0 499.6 1681.3 506.0 C1685.6 512.4 1687.7 516.8 1690.9 525.3 C1694.1 533.8 1697.5 547.7 1700.4 557.3 C1703.3 566.9 1705.7 577.2 1708.4 582.8 C1711.1 588.4 1714.2 588.0 1716.4 591.0 C1718.6 594.0 1721.3 597.5 1721.6 601.0 C1721.9 604.5 1719.8 608.8 1718.0 612.0 C1716.2 615.2 1713.9 617.5 1711.0 620.0 C1708.1 622.5 1703.9 625.1 1700.4 627.0 C1696.9 628.9 1692.5 631.0 1690.0 631.5 C1687.5 632.0 1685.7 631.8 1685.5 630.0 C1685.3 628.2 1687.8 623.5 1689.0 621.0 C1690.2 618.5 1691.6 618.3 1692.5 614.8 C1693.4 611.3 1694.6 604.5 1694.5 600.0 C1694.4 595.5 1693.7 593.0 1692.0 588.0 C1690.3 583.0 1688.4 577.8 1684.5 570.0 C1680.6 562.2 1673.8 549.8 1668.5 541.3 C1663.2 532.8 1657.8 526.9 1652.5 518.9 C1647.2 510.9 1640.6 500.9 1636.5 493.4 C1632.4 485.9 1630.2 480.4 1628.0 474.0 C1625.8 467.6 1624.3 460.5 1623.0 455.0 C1621.7 449.5 1621.2 444.7 1620.0 441.0 C1618.8 437.3 1617.8 432.0 1615.8 432.7 C1613.8 433.4 1611.0 439.5 1607.8 445.4 C1604.6 451.2 1599.8 459.8 1596.6 467.8 C1593.4 475.8 1589.7 485.9 1588.6 493.4 C1587.5 500.8 1590.5 506.1 1590.2 512.5 C1589.9 518.9 1589.9 524.2 1587.0 531.7 C1584.1 539.2 1576.6 550.2 1572.7 557.3 C1568.8 564.3 1565.0 569.2 1563.5 574.0 C1562.0 578.8 1564.6 582.9 1563.5 586.0 C1562.4 589.1 1560.1 591.8 1557.0 592.5 C1553.9 593.2 1549.3 591.1 1545.0 590.0 C1540.7 588.9 1535.5 587.2 1531.0 586.0 C1526.5 584.8 1521.1 584.0 1518.0 582.5 C1514.9 581.0 1513.8 579.2 1512.5 577.0 C1511.2 574.8 1510.1 571.4 1510.5 569.5 C1510.9 567.6 1512.8 565.8 1515.0 565.5 C1517.2 565.2 1520.8 567.5 1524.0 568.0 C1527.2 568.5 1530.5 568.7 1534.3 568.4 C1538.1 568.1 1543.5 569.1 1547.0 566.2 C1550.5 563.3 1552.8 556.6 1555.0 550.9 C1557.2 545.1 1558.5 539.2 1559.9 531.7 C1561.4 524.2 1562.9 514.5 1563.7 506.0 C1564.5 497.5 1564.0 489.6 1564.7 480.6 C1565.4 471.6 1566.6 461.4 1567.9 451.8 C1569.2 442.2 1570.3 432.1 1572.7 423.0 C1575.1 413.9 1578.8 407.1 1582.2 397.5 C1585.7 387.9 1590.7 374.2 1593.4 365.6 C1596.1 357.0 1597.4 351.1 1598.5 346.0 C1599.6 340.9 1600.0 339.4 1599.9 335.0 C1599.8 330.6 1598.3 324.6 1597.9 319.7 C1597.5 314.8 1598.8 308.4 1597.5 305.5 C1596.2 302.6 1592.1 304.3 1590.0 302.5 C1587.9 300.7 1585.8 297.3 1585.0 294.5 C1584.2 291.7 1583.7 288.8 1585.5 285.7 C1587.3 282.6 1591.9 279.0 1595.9 275.7 C1600.0 272.4 1605.8 269.6 1609.8 265.8 C1613.8 262.0 1616.9 256.3 1619.8 252.8 C1622.7 249.3 1625.7 247.5 1627.0 245.0 C1628.3 242.5 1628.0 240.2 1627.8 238.0 C1627.5 235.8 1627.0 233.3 1625.5 231.5 C1624.0 229.7 1621.3 228.1 1619.0 227.2 C1616.7 226.2 1613.8 226.6 1611.8 225.8 C1609.8 225.0 1608.1 224.4 1607.0 222.5 C1605.9 220.6 1605.9 216.8 1605.4 214.5 C1604.9 212.2 1604.8 210.4 1604.0 208.5 C1603.2 206.6 1600.3 205.0 1600.3 203.0 C1600.2 201.0 1603.1 199.3 1603.7 196.5 C1604.3 193.7 1603.0 189.7 1603.7 186.0 C1604.4 182.3 1605.2 177.9 1607.8 174.5 C1610.3 171.1 1614.7 167.7 1619.0 165.5 C1623.3 163.3 1629.5 161.8 1633.8 161.5Z" fill="none" stroke="#2c2c2c" stroke-width="10" opacity=".75" filter="url(#bl3)"/><ellipse cx="1637" cy="182" rx="15" ry="14" fill="#7c7c7c" opacity=".6" filter="url(#bl3)"/><path d="M1603 175L1622 170L1626 200L1618 226L1603 226Z" fill="#3e3e3e" opacity=".55" filter="url(#bl3)"/><path d="M1652 236C1660 250 1664 268 1660 288C1656 310 1648 330 1646 348" stroke="#3a3a3a" stroke-width="7" fill="none" opacity=".8" filter="url(#bl2)"/><path d="M1632 246C1640 262 1641 300 1637 345C1634 385 1628 415 1624 438" stroke="#828282" stroke-width="9" fill="none" opacity=".8" filter="url(#bl2)"/><path d="M1626 262C1628 300 1628 340 1625 380C1623 405 1620 420 1617 432" stroke="#3c3c3c" stroke-width="2.2" fill="none" opacity=".75" filter="url(#bl1)"/><ellipse cx="1598" cy="288" rx="9" ry="9" fill="#7e7e7e" opacity=".6" filter="url(#bl2)"/><ellipse cx="1652" cy="384" rx="9" ry="17" fill="#7c7c7c" opacity=".55" filter="url(#bl3)"/><path d="M1640 404C1648 409 1656 408 1660 402" stroke="#383838" stroke-width="2" fill="none" opacity=".7" filter="url(#bl1)"/><path d="M1596 380C1584 420 1580 470 1577 510C1574 540 1566 556 1558 570" stroke="#7a7a7a" stroke-width="9" fill="none" opacity=".65" filter="url(#bl3)"/><path d="M1640 440C1646 480 1662 505 1676 530C1690 560 1698 590 1706 606" stroke="#747474" stroke-width="6" fill="none" opacity=".55" filter="url(#bl3)"/><path d="M1622 446C1628 470 1636 490 1650 512" stroke="#343434" stroke-width="5" fill="none" opacity=".6" filter="url(#bl2)"/><path d="M1618 428C1620 436 1624 442 1630 446M1622 430L1631 440M1625 428L1633 436" stroke="#3a3a3a" stroke-width="1" fill="none" opacity=".8"/><path d="M1628 196C1633 194 1635 200 1631 207C1629 210 1626 209 1626 205" stroke="#3a3a3a" stroke-width="1.3" fill="#5a5a5a" opacity=".9"/></g><path d="M1633.8 161.5 C1638.1 161.2 1641.7 162.6 1645.0 164.0 C1648.3 165.4 1651.3 167.8 1653.7 170.0 C1656.1 172.2 1658.1 174.3 1659.5 177.0 C1660.9 179.7 1661.6 182.8 1662.0 186.0 C1662.4 189.2 1662.6 192.9 1661.7 196.0 C1660.8 199.1 1658.2 202.1 1656.5 204.5 C1654.8 206.9 1652.5 207.6 1651.8 210.5 C1651.1 213.4 1651.6 218.0 1652.5 221.9 C1653.4 225.8 1655.2 231.0 1657.0 234.0 C1658.8 237.0 1661.0 238.0 1663.0 240.0 C1665.0 242.0 1667.2 243.3 1668.7 245.8 C1670.2 248.3 1671.5 251.3 1672.0 255.0 C1672.5 258.7 1672.4 263.5 1671.7 268.0 C1671.0 272.5 1669.6 276.7 1668.0 282.0 C1666.4 287.3 1663.7 294.3 1662.0 300.0 C1660.3 305.7 1659.7 311.0 1657.7 316.0 C1655.7 321.0 1651.7 325.0 1650.0 330.0 C1648.3 335.0 1647.6 342.3 1647.8 346.0 C1648.0 349.7 1649.5 349.0 1651.0 352.0 C1652.5 355.0 1655.2 360.0 1657.0 364.0 C1658.8 368.0 1660.4 372.0 1661.5 376.0 C1662.6 380.0 1663.8 384.0 1663.7 388.0 C1663.6 392.0 1661.8 396.0 1661.0 400.0 C1660.2 404.0 1659.2 407.7 1658.9 412.0 C1658.6 416.3 1658.6 420.3 1658.9 426.0 C1659.2 431.7 1660.2 439.0 1660.5 446.0 C1660.8 453.0 1659.7 461.2 1660.5 468.0 C1661.3 474.8 1661.8 480.7 1665.3 487.0 C1668.8 493.3 1677.0 499.6 1681.3 506.0 C1685.6 512.4 1687.7 516.8 1690.9 525.3 C1694.1 533.8 1697.5 547.7 1700.4 557.3 C1703.3 566.9 1705.7 577.2 1708.4 582.8 C1711.1 588.4 1714.2 588.0 1716.4 591.0 C1718.6 594.0 1721.3 597.5 1721.6 601.0 C1721.9 604.5 1719.8 608.8 1718.0 612.0 C1716.2 615.2 1713.9 617.5 1711.0 620.0 C1708.1 622.5 1703.9 625.1 1700.4 627.0 C1696.9 628.9 1692.5 631.0 1690.0 631.5 C1687.5 632.0 1685.7 631.8 1685.5 630.0 C1685.3 628.2 1687.8 623.5 1689.0 621.0 C1690.2 618.5 1691.6 618.3 1692.5 614.8 C1693.4 611.3 1694.6 604.5 1694.5 600.0 C1694.4 595.5 1693.7 593.0 1692.0 588.0 C1690.3 583.0 1688.4 577.8 1684.5 570.0 C1680.6 562.2 1673.8 549.8 1668.5 541.3 C1663.2 532.8 1657.8 526.9 1652.5 518.9 C1647.2 510.9 1640.6 500.9 1636.5 493.4 C1632.4 485.9 1630.2 480.4 1628.0 474.0 C1625.8 467.6 1624.3 460.5 1623.0 455.0 C1621.7 449.5 1621.2 444.7 1620.0 441.0 C1618.8 437.3 1617.8 432.0 1615.8 432.7 C1613.8 433.4 1611.0 439.5 1607.8 445.4 C1604.6 451.2 1599.8 459.8 1596.6 467.8 C1593.4 475.8 1589.7 485.9 1588.6 493.4 C1587.5 500.8 1590.5 506.1 1590.2 512.5 C1589.9 518.9 1589.9 524.2 1587.0 531.7 C1584.1 539.2 1576.6 550.2 1572.7 557.3 C1568.8 564.3 1565.0 569.2 1563.5 574.0 C1562.0 578.8 1564.6 582.9 1563.5 586.0 C1562.4 589.1 1560.1 591.8 1557.0 592.5 C1553.9 593.2 1549.3 591.1 1545.0 590.0 C1540.7 588.9 1535.5 587.2 1531.0 586.0 C1526.5 584.8 1521.1 584.0 1518.0 582.5 C1514.9 581.0 1513.8 579.2 1512.5 577.0 C1511.2 574.8 1510.1 571.4 1510.5 569.5 C1510.9 567.6 1512.8 565.8 1515.0 565.5 C1517.2 565.2 1520.8 567.5 1524.0 568.0 C1527.2 568.5 1530.5 568.7 1534.3 568.4 C1538.1 568.1 1543.5 569.1 1547.0 566.2 C1550.5 563.3 1552.8 556.6 1555.0 550.9 C1557.2 545.1 1558.5 539.2 1559.9 531.7 C1561.4 524.2 1562.9 514.5 1563.7 506.0 C1564.5 497.5 1564.0 489.6 1564.7 480.6 C1565.4 471.6 1566.6 461.4 1567.9 451.8 C1569.2 442.2 1570.3 432.1 1572.7 423.0 C1575.1 413.9 1578.8 407.1 1582.2 397.5 C1585.7 387.9 1590.7 374.2 1593.4 365.6 C1596.1 357.0 1597.4 351.1 1598.5 346.0 C1599.6 340.9 1600.0 339.4 1599.9 335.0 C1599.8 330.6 1598.3 324.6 1597.9 319.7 C1597.5 314.8 1598.8 308.4 1597.5 305.5 C1596.2 302.6 1592.1 304.3 1590.0 302.5 C1587.9 300.7 1585.8 297.3 1585.0 294.5 C1584.2 291.7 1583.7 288.8 1585.5 285.7 C1587.3 282.6 1591.9 279.0 1595.9 275.7 C1600.0 272.4 1605.8 269.6 1609.8 265.8 C1613.8 262.0 1616.9 256.3 1619.8 252.8 C1622.7 249.3 1625.7 247.5 1627.0 245.0 C1628.3 242.5 1628.0 240.2 1627.8 238.0 C1627.5 235.8 1627.0 233.3 1625.5 231.5 C1624.0 229.7 1621.3 228.1 1619.0 227.2 C1616.7 226.2 1613.8 226.6 1611.8 225.8 C1609.8 225.0 1608.1 224.4 1607.0 222.5 C1605.9 220.6 1605.9 216.8 1605.4 214.5 C1604.9 212.2 1604.8 210.4 1604.0 208.5 C1603.2 206.6 1600.3 205.0 1600.3 203.0 C1600.2 201.0 1603.1 199.3 1603.7 196.5 C1604.3 193.7 1603.0 189.7 1603.7 186.0 C1604.4 182.3 1605.2 177.9 1607.8 174.5 C1610.3 171.1 1614.7 167.7 1619.0 165.5 C1623.3 163.3 1629.5 161.8 1633.8 161.5Z" fill="none" stroke="#444" stroke-width="1" opacity=".6"/><circle cx="1699.6" cy="625" r="39" fill="url(#gho)"/><path d="M1807.8 659.6L1772 652" stroke="#ee2222" stroke-width="1.8"/><path d="M1761 649.9L1774.2 646.6L1773.5 655.6Z" fill="#f01a1a"/><path d="M1807.8 659.6L1810 645L1815.4 623.3" stroke="#e83030" stroke-width="1.4" fill="none"/><path d="M1816 622.6L1828 625" stroke="#8be08b" stroke-width="1.4"/><path d="M1828 625L1857.4 631" stroke="#3f9a3f" stroke-width="1.4"/><path d="M1811.3 638.7L1858.8 649.2L1860.5 634" stroke="#1a1ab0" stroke-width="1.3" fill="none"/><path d="M1860.5 634L1867.8 612" stroke="#1a1ab0" stroke-width="1.3"/><path d="M1866.4 633L1872 607" stroke="#1f9a1f" stroke-width="2.4"/><path d="M1874.8 594L1866.8 605.8L1878.6 607.4Z" fill="#18a018"/><path d="M1859.4 628.4L1864.6 634.4L1859.4 640.6L1854.4 634.4Z" fill="#1414b4"/><path d="M1857 652L1856 668M1861 651L1862 668M1852 664L1866 666M1853 668L1864 670" stroke="#d8a428" stroke-width="1.3" opacity=".9"/><path d="M1846 675C1852 679 1862 681 1870 680" stroke="#d04020" stroke-width="2" fill="none" opacity=".85"/><path d="M1860.5 170L1882 155.7L1921.6 163.8L1901 178.2Z" fill="#3b6534"/><path d="M1860.5 170L1901 178.2L1900 219.5L1860.5 212.3Z" fill="#5a599c"/><path d="M1901 178.2L1921.6 163.8L1921.6 206L1900 219.5Z" fill="#733c3a"/><path d="M1860.5 170L1901 178.2L1900 219.5L1860.5 212.3ZM1901 178.2L1921.6 163.8" fill="none" stroke="#2c2c40" stroke-width="1" opacity=".7"/><g fill="none" stroke="#a9b0a8" stroke-width="1" opacity=".5"><circle cx="1891" cy="188" r="35"/><ellipse cx="1891" cy="188" rx="38" ry="14.5"/><ellipse cx="1891" cy="188" rx="13" ry="35" transform="rotate(8 1891 188)"/></g><text x="1869" y="201" font-size="11" fill="#45457a" font-family="Liberation Sans" font-weight="bold" transform="skewY(10) translate(0,-330)">Back</text><g fill="none" stroke="#9c9c9c" stroke-width="1" opacity=".8"><path d="M1338 112L1352 109L1367 113L1366 138L1352 143L1339 139Z"/><path d="M1338 112L1352 117L1367 113M1352 117V143M1341 128L1352 124L1365 128"/></g></svg>
<div class="t" style="left:688px;top:110.0px;font-size:11px;color:#ffffff;line-height:16px;letter-spacing:-0.089px;">16 : 9</div>
<div style="left:1787px;top:107px;width:152px;height:24px;background:linear-gradient(#101010,#1a1a1a);border:1px solid #262626;box-sizing:border-box;"></div>
<svg style="left:1792px;top:111px" width="15" height="17"><rect x="2" y="1" width="10.4" height="12.4" fill="none" stroke="#78e8ec" stroke-width="1.5"/><path d="M7.2 1V13.4M2 6.2H12.4" stroke="#78e8ec" stroke-width="1.3"/><path d="M0 14.8H14.4" stroke="#78e8ec" stroke-width="2"/></svg>
<div class="t" style="left:1811px;top:111.0px;font-size:11.3px;color:#9ce8ec;line-height:16px;letter-spacing:-0.028px;">Perspective View</div>
<svg style="left:1919px;top:117px;color:#78e8ec;" width="8" height="6"><use href="#td"/></svg>
<svg style="left:1758px;top:105px" width="28" height="28"><defs><radialGradient id="ds" cx="40%" cy="38%" r="65%"><stop offset="0" stop-color="#b9f4f2"/><stop offset="1" stop-color="#7fdcda"/></radialGradient></defs><circle cx="11" cy="11.2" r="8.6" fill="url(#ds)" stroke="#78e6e6" stroke-width="1.2" opacity=".8"/><path d="M19 20.4h7l-3.5 5z" fill="#78e8ec" opacity=".85"/></svg>
<svg style="left:1947px;top:112px;color:#78e8ec;" width="15" height="13"><use href="#menu"/></svg>
<svg style="left:1941px;top:136px" width="28" height="140" viewBox="1941 136 28 140" fill="#78e8ec"><circle cx="1955.5" cy="141.5" r="3.2"/><path d="M1947 144.5C1941 147 1942.500 151.500 1951 152.500C1956 153 1959 152.500 1961 152L1961 154.500L1967.500 150L1961 146L1961 148.500C1957 149.500 1952 149.500 1948.500 148.500C1946 147.500 1946.500 146 1949 145.500Z"/><circle cx="1954" cy="173" r="2.600"/><path d="M1954 162L1958.500 167.500H1949.500ZM1954 184.500L1958.500 179H1949.500ZM1942.500 173L1948 168.500V177.500ZM1965.500 173L1960 168.500V177.500Z"/><circle cx="1959" cy="197" r="5.600" fill="none" stroke="#78e8ec" stroke-width="2.600"/><path d="M1954.500 202L1946.500 209.500" stroke="#78e8ec" stroke-width="3.600" stroke-linecap="round"/><path d="M1946 223V218.500H1950.500M1959.500 218.500H1964V223M1964 232V236.500H1959.500M1950.500 236.500H1946V232" fill="none" stroke="#78e8ec" stroke-width="2"/><path d="M1955 224.500V230.500M1952 227.500H1958" stroke="#78e8ec" stroke-width="1.800"/><circle cx="1954" cy="254.200" r="10"/><path d="M1954 247L1960 254H1956.500V264.500H1951.500V254H1948Z" fill="#6b6b6b"/></svg>
<div style="left:1973px;top:76px;width:467px;height:706px;background:#0b0b0b;"></div>
<div style="left:1976px;top:100px;width:4px;height:660px;background:#111;"></div>
<svg style="left:1985px;top:76px" width="455" height="24"><path d="M109 24L118 3H171L182 24Z" fill="#151515"/><path d="M0 24V23H455V24Z" fill="#1c1c1c"/></svg>
<div class="t" style="left:2001px;top:80.3px;font-size:12.3px;color:#6fc7cc;line-height:16px;letter-spacing:0.044px;">Parameters</div>
<div class="t" style="left:2102px;top:80.3px;font-size:12.3px;color:#9eeaee;line-height:16px;letter-spacing:-0.066px;">Surfaces</div>
<div class="t" style="left:2187px;top:80.3px;font-size:12.3px;color:#6fc7cc;line-height:16px;letter-spacing:-0.013px;">Render Settings</div>
<div class="t" style="left:2312px;top:80.3px;font-size:12.3px;color:#6fc7cc;line-height:16px;letter-spacing:0.084px;">DForm</div>
<div style="left:2429px;top:78px;width:11px;height:21px;background:#050505;border-left:1px solid #444;"></div>
<svg style="left:2432px;top:80px;color:#78e8ec;" width="15" height="13"><use href="#menu"/></svg>
<div style="left:1985px;top:101px;width:455px;height:21px;background:linear-gradient(#232323,#141414);"></div>
<div style="left:1986px;top:102px;width:62px;height:19px;background:linear-gradient(#2a2a2a,#161616);border-left:1px solid #0a0a0a;border-right:1px solid #3a3a3a;box-sizing:border-box;"></div>
<div style="left:2050px;top:102px;width:51px;height:19px;background:linear-gradient(#181818,#101010);border-left:1px solid #0a0a0a;border-right:1px solid #3a3a3a;box-sizing:border-box;"></div>
<div style="left:2103px;top:102px;width:90px;height:19px;background:linear-gradient(#2a2a2a,#161616);border-left:1px solid #0a0a0a;border-right:1px solid #3a3a3a;box-sizing:border-box;"></div>
<div class="t" style="left:1999px;top:103.0px;font-size:11px;color:#6fc7cc;line-height:16px;letter-spacing:-0.042px;">Presets</div>
<div class="t" style="left:2061px;top:103.0px;font-size:11px;color:#a6eef2;line-height:16px;letter-spacing:-0.125px;">Editor</div>
<div class="t" style="left:2115px;top:103.0px;font-size:11px;color:#6fc7cc;line-height:16px;letter-spacing:-0.105px;">Shader Baker</div>
<div style="left:1985px;top:122px;width:455px;height:22px;background:#111111;"></div>
<div class="t" style="left:1990px;top:125.5px;font-size:11px;color:#9ae8ec;line-height:16px;letter-spacing:-0.104px;">Shader : Iray Uber</div>
<div style="left:1988px;top:144px;width:160px;height:618px;background:#474747;"></div>
<div style="left:1988px;top:144px;width:160px;height:19px;background:#131313;"></div>
<div style="left:1988px;top:163px;width:160px;height:1px;background:#3a3a3a;"></div>
<div class="t" style="left:2000px;top:146.0px;font-size:11px;color:#9ae8ec;line-height:16px;letter-spacing:-0.078px;">All</div>
<div style="left:1988px;top:164px;width:160px;height:19px;background:#131313;"></div>
<div style="left:1988px;top:183px;width:160px;height:1px;background:#3a3a3a;"></div>
<div class="t" style="left:2000px;top:166.0px;font-size:11px;color:#9ae8ec;line-height:16px;letter-spacing:-0.028px;">Favorites</div>
<div style="left:1988px;top:184px;width:160px;height:19px;background:#131313;"></div>
<div style="left:1988px;top:203px;width:160px;height:1px;background:#3a3a3a;"></div>
<div class="t" style="left:2000px;top:186.0px;font-size:11px;color:#9ae8ec;line-height:16px;letter-spacing:-0.097px;">Currently Used</div>
<div style="left:1988px;top:203px;width:160px;height:20px;background:#444;"></div>
<div style="left:1988px;top:223px;width:160px;height:1px;background:#525252;"></div>
<div style="left:1988px;top:224px;width:160px;height:20px;background:#444;"></div>
<svg style="left:1991px;top:209px;color:#78e8ec;" width="6" height="8"><use href="#tr"/></svg>
<svg style="left:2000px;top:205px;color:#9af2f4;--k:#2f767a;" width="15" height="16"><use href="#cube"/></svg>
<div class="t" style="left:2020px;top:205.5px;font-size:11px;color:#7b7b7b;line-height:16px;letter-spacing:-0.081px;">Sphere</div>
<svg style="left:1990px;top:231px;color:#78e8ec;" width="8" height="6"><use href="#td"/></svg>
<svg style="left:2000px;top:225px;color:#9af2f4;--k:#2f767a;" width="15" height="16"><use href="#cube"/></svg>
<div class="t" style="left:2020px;top:225.5px;font-size:11px;color:#7b7b7b;line-height:16px;letter-spacing:0.002px;">Sphere (5)</div>
<div style="left:1988px;top:244px;width:160px;height:20px;background:#f7c22e;"></div>
<svg style="left:2001px;top:250px;color:#140c0c;" width="6" height="8"><use href="#tr"/></svg>
<svg style="left:2009px;top:246px" width="18" height="16"><path d="M1 8.500L6.500 3L9 5.500V13L6 14Z" fill="#d8a050" stroke="#140c0c" stroke-width="1.200"/><path d="M6.500 2H11.500V9H6.500Z" fill="#b8902a" stroke="#140c0c" stroke-width="1"/><path d="M11 4L16.500 9.500L11.500 14.500L6.500 9.500Z" fill="#0c0808"/></svg>
<div class="t" style="left:2030.7px;top:245.5px;font-size:11px;color:#140c0c;line-height:16px;letter-spacing:-0.123px;">Default</div>
<svg style="left:1990px;top:741px" width="16" height="16"><rect x="1" y="2" width="13" height="13" fill="#6a6a6a" stroke="#8a8a8a" stroke-width="1"/><path d="M3.500 8L6.500 12L14 2.500" stroke="#f2c030" stroke-width="2.600" fill="none"/></svg>
<div class="t" style="left:2011px;top:741.0px;font-size:11px;color:#9ce8ec;line-height:16px;letter-spacing:-0.078px;">Show Sub Items</div>
<div style="left:2150px;top:144px;width:5px;height:618px;background:#3f3f3f;"></div>
<div style="left:2155px;top:144px;width:2px;height:618px;background:#0e0e0e;"></div>
<div style="left:2157px;top:144px;width:283px;height:27px;background:#3c3c3c;"></div>
<div style="left:2158px;top:145px;width:282px;height:25px;background:#484848;"></div>
<div style="left:2186px;top:147px;width:254px;height:22px;background:#8b8b8b;"></div>
<svg style="left:2162px;top:149px;color:#78e8ec;" width="18" height="18"><use href="#mag"/></svg>
<div class="t" style="left:2188px;top:150.0px;font-size:11px;color:#6fbcc0;line-height:16px;letter-spacing:-0.007px;">Enter text to filter by...</div>
<div style="left:2157px;top:171px;width:281px;height:591px;background:#1a1a1a;"></div>
<div style="left:2438px;top:171px;width:2px;height:591px;background:#0a0a0a;"></div>
<div style="left:2157px;top:171px;width:281px;height:17px;background:linear-gradient(#383838,#333333);"></div>
<div style="left:2157px;top:188px;width:281px;height:23px;background:#2a2a2a;"></div>
<div class="t" style="left:2160px;top:170.7px;font-size:11px;color:#9ce8ec;line-height:16px;letter-spacing:-0.297px;">Base Thin Film</div>
<svg style="left:2424px;top:174px;color:#4c4c4c;" width="11" height="11"><use href="#gear"/></svg>
<div style="left:2159px;top:188px;width:22px;height:21px;background:#0a0a0a;"></div>
<svg style="left:2167px;top:196px;color:#78e8ec;" width="8" height="6"><use href="#td"/></svg>
<div style="left:2181px;top:188px;width:254px;height:21px;background:linear-gradient(90deg,#4d6e92 0%,#2a3036 22%,#1c1c1c 50%,#0c0c0c 100%);border:1px solid #f2f2f2;box-sizing:border-box;"></div>
<div style="left:2193px;top:197px;width:188px;height:2px;background:#2a2a2a;"></div>
<div style="left:2186px;top:197px;width:5px;height:2px;background:#050505;"></div>
<div style="left:2383px;top:197px;width:6px;height:2px;background:#050505;"></div>
<div style="left:2385px;top:195px;width:2px;height:6px;background:#050505;"></div>
<div style="left:2284.5px;top:193.5px;width:9px;height:9px;border-radius:5px;background:radial-gradient(#222 25%,#9a9a9a 45%,#777 70%,#444 100%)"></div>
<div class="t" style="left:2395px;top:190.5px;font-size:11px;color:#3a3a3a;line-height:16px;width:30px;text-align:right;">0.00</div>
<div style="left:2157px;top:211px;width:281px;height:17px;background:linear-gradient(#383838,#333333);"></div>
<div style="left:2157px;top:228px;width:281px;height:23px;background:#2a2a2a;"></div>
<div class="t" style="left:2160px;top:210.7px;font-size:11px;color:#9ce8ec;line-height:16px;letter-spacing:-0.097px;">Base Bump</div>
<svg style="left:2424px;top:214px;color:#4c4c4c;" width="11" height="11"><use href="#gear"/></svg>
<div style="left:2159px;top:228px;width:22px;height:21px;background:#0a0a0a;"></div>
<svg style="left:2167px;top:236px;color:#78e8ec;" width="8" height="6"><use href="#td"/></svg>
<div style="left:2181px;top:228px;width:254px;height:21px;background:linear-gradient(90deg,#4d6e92 0%,#2a3036 22%,#1c1c1c 50%,#0c0c0c 100%);border:1px solid #3c3c3c;box-sizing:border-box;"></div>
<div class="t" style="left:2181px;top:230.5px;font-size:11px;color:#9ce8ec;line-height:16px;width:254px;text-align:center;">Choose Map</div>
<div style="left:2157px;top:251px;width:281px;height:17px;background:linear-gradient(#383838,#333333);"></div>
<div style="left:2157px;top:268px;width:281px;height:23px;background:#2a2a2a;"></div>
<div class="t" style="left:2160px;top:250.7px;font-size:11px;color:#9ce8ec;line-height:16px;letter-spacing:-0.291px;">Normal Map</div>
<svg style="left:2424px;top:254px;color:#4c4c4c;" width="11" height="11"><use href="#gear"/></svg>
<div style="left:2159px;top:268px;width:22px;height:21px;background:#0a0a0a;"></div>
<svg style="left:2167px;top:276px;color:#78e8ec;" width="8" height="6"><use href="#td"/></svg>
<div style="left:2181px;top:268px;width:254px;height:21px;background:linear-gradient(90deg,#4d6e92 0%,#2a3036 22%,#1c1c1c 50%,#0c0c0c 100%);border:1px solid #3c3c3c;box-sizing:border-box;"></div>
<div class="t" style="left:2181px;top:270.5px;font-size:11px;color:#9ce8ec;line-height:16px;width:254px;text-align:center;">Choose Map</div>
<div style="left:2157px;top:291px;width:281px;height:17px;background:linear-gradient(#383838,#333333);"></div>
<div style="left:2157px;top:308px;width:281px;height:23px;background:#2a2a2a;"></div>
<div class="t" style="left:2160px;top:290.7px;font-size:11px;color:#9ce8ec;line-height:16px;letter-spacing:-0.220px;">Metallic Flakes Weight</div>
<svg style="left:2424px;top:294px;color:#4c4c4c;" width="11" height="11"><use href="#gear"/></svg>
<div style="left:2159px;top:308px;width:22px;height:21px;background:#0a0a0a;"></div>
<svg style="left:2167px;top:316px;color:#78e8ec;" width="8" height="6"><use href="#td"/></svg>
<div style="left:2181px;top:308px;width:254px;height:21px;background:linear-gradient(90deg,#a3703e 0%,#2a3036 22%,#1c1c1c 50%,#0c0c0c 100%);border:1px solid #3c3c3c;box-sizing:border-box;"></div>
<div style="left:2193px;top:317px;width:188px;height:2px;background:#2a2a2a;"></div>
<div style="left:2186px;top:317px;width:5px;height:2px;background:#050505;"></div>
<div style="left:2383px;top:317px;width:6px;height:2px;background:#050505;"></div>
<div style="left:2385px;top:315px;width:2px;height:6px;background:#050505;"></div>
<div style="left:2194px;top:312px;width:6px;height:11px;border-radius:3px;background:linear-gradient(90deg,#777,#aaa,#777)"></div>
<div class="t" style="left:2395px;top:310.5px;font-size:11px;color:#3a3a3a;line-height:16px;width:30px;text-align:right;">0.00</div>
<div style="left:2157px;top:331px;width:281px;height:17px;background:linear-gradient(#383838,#333333);"></div>
<div style="left:2157px;top:348px;width:281px;height:23px;background:#2a2a2a;"></div>
<div class="t" style="left:2160px;top:330.7px;font-size:11px;color:#9ce8ec;line-height:16px;letter-spacing:-0.208px;">Top Coat Weight</div>
<svg style="left:2424px;top:334px;color:#4c4c4c;" width="11" height="11"><use href="#gear"/></svg>
<div style="left:2159px;top:348px;width:22px;height:21px;background:#0a0a0a;"></div>
<svg style="left:2167px;top:356px;color:#78e8ec;" width="8" height="6"><use href="#td"/></svg>
<div style="left:2181px;top:348px;width:254px;height:21px;background:linear-gradient(90deg,#4d6e4a 0%,#2a3036 22%,#1c1c1c 50%,#0c0c0c 100%);border:1px solid #3c3c3c;box-sizing:border-box;"></div>
<div style="left:2193px;top:357px;width:188px;height:2px;background:#2a2a2a;"></div>
<div style="left:2186px;top:357px;width:5px;height:2px;background:#050505;"></div>
<div style="left:2383px;top:357px;width:6px;height:2px;background:#050505;"></div>
<div style="left:2385px;top:355px;width:2px;height:6px;background:#050505;"></div>
<div style="left:2194px;top:352px;width:6px;height:11px;border-radius:3px;background:linear-gradient(90deg,#777,#aaa,#777)"></div>
<div class="t" style="left:2395px;top:350.5px;font-size:11px;color:#3a3a3a;line-height:16px;width:30px;text-align:right;">0.00</div>
<div style="left:2157px;top:371px;width:281px;height:17px;background:linear-gradient(#383838,#333333);"></div>
<div style="left:2157px;top:388px;width:281px;height:23px;background:#2a2a2a;"></div>
<div class="t" style="left:2160px;top:370.7px;font-size:11px;color:#9ce8ec;line-height:16px;letter-spacing:-0.334px;">Thin Walled</div>
<svg style="left:2424px;top:374px;color:#4c4c4c;" width="11" height="11"><use href="#gear"/></svg>
<div style="left:2159px;top:389px;width:276px;height:20px;background:linear-gradient(90deg,#7a5a9a 0%,#3a3440 22%,#1c1c1c 45%,#101010 100%);border:1px solid #3c3c3c;box-sizing:border-box;"></div>
<div style="left:2275px;top:390px;width:44px;height:18px;background:#0a0a0a;border-left:1px solid #333;border-right:1px solid #444;box-sizing:border-box;"></div>
<div class="t" style="left:2275px;top:391.0px;font-size:11px;color:#9ce8ec;line-height:16px;width:44px;text-align:center;">On</div>
<div style="left:2157px;top:411px;width:281px;height:17px;background:linear-gradient(#383838,#333333);"></div>
<div style="left:2157px;top:428px;width:281px;height:23px;background:#2a2a2a;"></div>
<div class="t" style="left:2160px;top:410.7px;font-size:11px;color:#9ce8ec;line-height:16px;letter-spacing:-0.283px;">Emission Color</div>
<svg style="left:2424px;top:414px;color:#4c4c4c;" width="11" height="11"><use href="#gear"/></svg>
<div style="left:2159px;top:428px;width:22px;height:21px;background:#0a0a0a;"></div>
<svg style="left:2167px;top:436px;color:#78e8ec;" width="8" height="6"><use href="#td"/></svg>
<div style="left:2181px;top:428px;width:254px;height:21px;background:#020202;border:1px solid #3c3c3c;border-left:1px solid #aaa;box-sizing:border-box;"></div>
<div class="t" style="left:2203px;top:430.5px;font-size:11px;color:#dff;line-height:16px;width:40px;text-align:center;">0.00</div>
<div class="t" style="left:2287px;top:430.5px;font-size:11px;color:#dff;line-height:16px;width:40px;text-align:center;">0.00</div>
<div class="t" style="left:2371px;top:430.5px;font-size:11px;color:#dff;line-height:16px;width:40px;text-align:center;">0.00</div>
<div style="left:2157px;top:451px;width:281px;height:17px;background:linear-gradient(#383838,#333333);"></div>
<div style="left:2157px;top:468px;width:281px;height:23px;background:#2a2a2a;"></div>
<div class="t" style="left:2160px;top:450.7px;font-size:11px;color:#9ce8ec;line-height:16px;letter-spacing:-0.126px;">Cutout Opacity</div>
<svg style="left:2424px;top:454px;color:#4c4c4c;" width="11" height="11"><use href="#gear"/></svg>
<div style="left:2159px;top:468px;width:22px;height:21px;background:#0a0a0a;"></div>
<svg style="left:2167px;top:476px;color:#78e8ec;" width="8" height="6"><use href="#td"/></svg>
<div style="left:2181px;top:468px;width:254px;height:21px;background:linear-gradient(90deg,#555 0%,#2a3036 22%,#1c1c1c 50%,#0c0c0c 100%);border:1px solid #3c3c3c;box-sizing:border-box;"></div>
<div style="left:2193px;top:477px;width:188px;height:2px;background:#2a2a2a;"></div>
<div style="left:2198px;top:476px;width:44px;height:3px;background:#050505;border-radius:2px;"></div>
<div style="left:2186px;top:477px;width:5px;height:2px;background:#050505;"></div>
<div style="left:2383px;top:477px;width:6px;height:2px;background:#050505;"></div>
<div style="left:2385px;top:475px;width:2px;height:6px;background:#050505;"></div>
<div style="left:2241px;top:472px;width:6px;height:11px;border-radius:3px;background:linear-gradient(90deg,#777,#aaa,#777)"></div>
<div class="t" style="left:2395px;top:470.5px;font-size:11px;color:#9ae8ec;line-height:16px;width:30px;text-align:right;font-weight:bold;">0.26</div>
<div style="left:2157px;top:491px;width:281px;height:17px;background:linear-gradient(#383838,#333333);"></div>
<div style="left:2157px;top:508px;width:281px;height:23px;background:#2a2a2a;"></div>
<div class="t" style="left:2160px;top:490.7px;font-size:11px;color:#9ce8ec;line-height:16px;letter-spacing:-0.204px;">Displacement Strength</div>
<svg style="left:2424px;top:494px;color:#4c4c4c;" width="11" height="11"><use href="#gear"/></svg>
<div style="left:2159px;top:508px;width:22px;height:21px;background:#0a0a0a;"></div>
<svg style="left:2167px;top:516px;color:#78e8ec;" width="8" height="6"><use href="#td"/></svg>
<div style="left:2181px;top:508px;width:254px;height:21px;background:linear-gradient(90deg,#555 0%,#2a3036 22%,#1c1c1c 50%,#0c0c0c 100%);border:1px solid #3c3c3c;box-sizing:border-box;"></div>
<div class="t" style="left:2181px;top:510.5px;font-size:11px;color:#9ce8ec;line-height:16px;width:254px;text-align:center;">Choose Map</div>
<div style="left:2157px;top:531px;width:281px;height:17px;background:linear-gradient(#383838,#333333);"></div>
<div style="left:2157px;top:548px;width:281px;height:23px;background:#2a2a2a;"></div>
<div class="t" style="left:2160px;top:530.7px;font-size:11px;color:#9ce8ec;line-height:16px;letter-spacing:-0.200px;">Horizontal Tiles</div>
<svg style="left:2424px;top:534px;color:#4c4c4c;" width="11" height="11"><use href="#gear"/></svg>
<div style="left:2159px;top:549px;width:276px;height:20px;background:linear-gradient(90deg,#858585 0%,#4a4a4a 14%,#1e1e1e 32%,#0c0c0c 100%);border:1px solid #3c3c3c;box-sizing:border-box;"></div>
<div style="left:2172px;top:558px;width:208px;height:2px;background:#3a3a3a;"></div>
<div style="left:2163px;top:558px;width:5px;height:2px;background:#050505;"></div>
<div style="left:2383px;top:558px;width:6px;height:2px;background:#050505;"></div>
<div style="left:2385px;top:556px;width:2px;height:6px;background:#050505;"></div>
<div style="left:2273.5px;top:554.5px;width:9px;height:9px;border-radius:5px;background:radial-gradient(#222 25%,#9a9a9a 45%,#777 70%,#444 100%)"></div>
<div class="t" style="left:2395px;top:551.0px;font-size:11px;color:#3a3a3a;line-height:16px;width:30px;text-align:right;">1.00</div>
<div style="left:2157px;top:571px;width:281px;height:17px;background:linear-gradient(#383838,#333333);"></div>
<div style="left:2157px;top:588px;width:281px;height:23px;background:#2a2a2a;"></div>
<div class="t" style="left:2160px;top:570.7px;font-size:11px;color:#9ce8ec;line-height:16px;letter-spacing:0.016px;">Horizontal Offset</div>
<svg style="left:2424px;top:574px;color:#4c4c4c;" width="11" height="11"><use href="#gear"/></svg>
<div style="left:2159px;top:589px;width:276px;height:20px;background:linear-gradient(90deg,#858585 0%,#4a4a4a 14%,#1e1e1e 32%,#0c0c0c 100%);border:1px solid #3c3c3c;box-sizing:border-box;"></div>
<div style="left:2172px;top:598px;width:208px;height:2px;background:#3a3a3a;"></div>
<div style="left:2163px;top:598px;width:5px;height:2px;background:#050505;"></div>
<div style="left:2383px;top:598px;width:6px;height:2px;background:#050505;"></div>
<div style="left:2385px;top:596px;width:2px;height:6px;background:#050505;"></div>
<div style="left:2273.5px;top:594.5px;width:9px;height:9px;border-radius:5px;background:radial-gradient(#222 25%,#9a9a9a 45%,#777 70%,#444 100%)"></div>
<div class="t" style="left:2395px;top:591.0px;font-size:11px;color:#3a3a3a;line-height:16px;width:30px;text-align:right;">0.00</div>
<div style="left:2157px;top:611px;width:281px;height:17px;background:linear-gradient(#383838,#333333);"></div>
<div style="left:2157px;top:628px;width:281px;height:23px;background:#2a2a2a;"></div>
<div class="t" style="left:2160px;top:610.7px;font-size:11px;color:#9ce8ec;line-height:16px;letter-spacing:-0.125px;">Vertical Tiles</div>
<svg style="left:2424px;top:614px;color:#4c4c4c;" width="11" height="11"><use href="#gear"/></svg>
<div style="left:2159px;top:629px;width:276px;height:20px;background:linear-gradient(90deg,#858585 0%,#4a4a4a 14%,#1e1e1e 32%,#0c0c0c 100%);border:1px solid #3c3c3c;box-sizing:border-box;"></div>
<div style="left:2172px;top:638px;width:208px;height:2px;background:#3a3a3a;"></div>
<div style="left:2163px;top:638px;width:5px;height:2px;background:#050505;"></div>
<div style="left:2383px;top:638px;width:6px;height:2px;background:#050505;"></div>
<div style="left:2385px;top:636px;width:2px;height:6px;background:#050505;"></div>
<div style="left:2273.5px;top:634.5px;width:9px;height:9px;border-radius:5px;background:radial-gradient(#222 25%,#9a9a9a 45%,#777 70%,#444 100%)"></div>
<div class="t" style="left:2395px;top:631.0px;font-size:11px;color:#3a3a3a;line-height:16px;width:30px;text-align:right;">1.00</div>
<div style="left:2157px;top:651px;width:281px;height:17px;background:linear-gradient(#383838,#333333);"></div>
<div style="left:2157px;top:668px;width:281px;height:23px;background:#2a2a2a;"></div>
<div class="t" style="left:2160px;top:650.7px;font-size:11px;color:#9ce8ec;line-height:16px;letter-spacing:0.115px;">Vertical Offset</div>
<svg style="left:2424px;top:654px;color:#4c4c4c;" width="11" height="11"><use href="#gear"/></svg>
<div style="left:2159px;top:669px;width:276px;height:20px;background:linear-gradient(90deg,#858585 0%,#4a4a4a 14%,#1e1e1e 32%,#0c0c0c 100%);border:1px solid #3c3c3c;box-sizing:border-box;"></div>
<div style="left:2172px;top:678px;width:208px;height:2px;background:#3a3a3a;"></div>
<div style="left:2163px;top:678px;width:5px;height:2px;background:#050505;"></div>
<div style="left:2383px;top:678px;width:6px;height:2px;background:#050505;"></div>
<div style="left:2385px;top:676px;width:2px;height:6px;background:#050505;"></div>
<div style="left:2273.5px;top:674.5px;width:9px;height:9px;border-radius:5px;background:radial-gradient(#222 25%,#9a9a9a 45%,#777 70%,#444 100%)"></div>
<div class="t" style="left:2395px;top:671.0px;font-size:11px;color:#3a3a3a;line-height:16px;width:30px;text-align:right;">0.00</div>
<div style="left:2157px;top:691px;width:281px;height:17px;background:linear-gradient(#383838,#333333);"></div>
<div style="left:2157px;top:708px;width:281px;height:23px;background:#2a2a2a;"></div>
<div class="t" style="left:2160px;top:690.7px;font-size:11px;color:#9ce8ec;line-height:16px;letter-spacing:-0.143px;">UV Set</div>
<svg style="left:2424px;top:694px;color:#4c4c4c;" width="11" height="11"><use href="#gear"/></svg>
<div style="left:2159px;top:708px;width:276px;height:21px;background:linear-gradient(#1a1a1a,#080808);border:1px solid #333;box-sizing:border-box;"></div>
<div class="t" style="left:2165px;top:710.0px;font-size:11px;color:#9ae8ec;line-height:16px;letter-spacing:-0.064px;">Default UVs</div>
<svg style="left:2419px;top:716px;color:#78e8ec;" width="8" height="6"><use href="#td"/></svg>
<div style="left:2157px;top:731px;width:281px;height:17px;background:linear-gradient(#383838,#333333);"></div>
<div style="left:2157px;top:748px;width:281px;height:14px;background:#2a2a2a;"></div>
<div class="t" style="left:2160px;top:730.7px;font-size:11px;color:#9ce8ec;line-height:16px;letter-spacing:-0.154px;">Smooth</div>
<svg style="left:2424px;top:734px;color:#4c4c4c;" width="11" height="11"><use href="#gear"/></svg>
<div style="left:2159px;top:749px;width:276px;height:13px;background:linear-gradient(90deg,#777 0%,#3c3c3c 22%,#1c1c1c 45%,#101010 100%);border:1px solid #3c3c3c;box-sizing:border-box;"></div>
<div style="left:2275px;top:750px;width:44px;height:12px;background:#0a0a0a;border-left:1px solid #333;border-right:1px solid #444;box-sizing:border-box;"></div>
<div style="left:2275px;top:751px;width:44px;height:11px;overflow:hidden"><div class="t" style="left:0;top:0px;width:44px;text-align:center;font-size:11px;line-height:16px;color:#9ce8ec">On</div></div>
<div style="left:1985px;top:762px;width:455px;height:10px;background:#0b0b0b;"></div>
<div style="left:1985px;top:765px;width:455px;height:5px;background:#4a4a4a;"></div>
<div style="left:2206px;top:765px;width:20px;height:5px;background:#0a0a0a;"></div>
<div style="left:530px;top:782px;width:1910px;height:23px;background:#0a0a0a;"></div>
<svg style="left:534px;top:782px" width="500" height="23"><path d="M0 23L8 2H68L80 23Z" fill="#161616"/></svg>
<div class="t" style="left:548px;top:783.2px;font-size:12.3px;color:#9eeaee;line-height:16px;letter-spacing:0.123px;">Timeline</div>
<div class="t" style="left:631.6px;top:783.2px;font-size:12.3px;color:#6fc7cc;line-height:16px;letter-spacing:-0.199px;">aniMate2</div>
<div class="t" style="left:717.3px;top:783.2px;font-size:12.3px;color:#6fc7cc;line-height:16px;letter-spacing:-0.010px;">aniMate2 Constraints</div>
<div class="t" style="left:870px;top:783.2px;font-size:12.3px;color:#6fc7cc;line-height:16px;letter-spacing:-0.089px;">graphMate</div>
<div class="t" style="left:964px;top:783.2px;font-size:12.3px;color:#6fc7cc;line-height:16px;letter-spacing:-0.355px;">keyMate</div>
<div style="left:2430px;top:780px;width:10px;height:22px;background:#050505;border-left:1px solid #444;"></div>
<svg style="left:2433px;top:783px;color:#78e8ec;" width="15" height="13"><use href="#menu"/></svg>
<div style="left:533px;top:804px;width:1907px;height:1px;background:#4a4a4a;"></div>
<div style="left:533px;top:805px;width:1907px;height:178px;background:#2a2a2a;"></div>
<div style="left:534px;top:806px;width:250px;height:36px;background:linear-gradient(#414141 0,#434343 78%,#4a464c 100%);"></div>
<div style="left:784px;top:806px;width:2px;height:36px;background:#1a1a1a;"></div>
<div class="t" style="left:646px;top:815.0px;font-size:11px;color:#9ce8ec;line-height:16px;letter-spacing:-0.836px;">Name</div>
<div style="left:786px;top:806px;width:1648px;height:36px;background:#161616;"></div>
<div style="left:786px;top:836px;width:1648px;height:6px;background:#232323;"></div>
<svg style="left:786px;top:806px" width="1646" height="36" viewBox="786 806 1646 36"><rect x="849.0" y="825" width="1.6" height="10" fill="#565656"/><rect x="903.3" y="825" width="1.6" height="10" fill="#565656"/><rect x="957.7" y="825" width="1.6" height="10" fill="#565656"/><rect x="1012.0" y="825" width="1.6" height="10" fill="#565656"/><rect x="1066.1" y="820" width="2.4" height="15" fill="#c8f6f8"/><rect x="1120.6" y="825" width="1.6" height="10" fill="#565656"/><rect x="1174.9" y="825" width="1.6" height="10" fill="#565656"/><rect x="1229.3" y="825" width="1.6" height="10" fill="#565656"/><rect x="1283.6" y="825" width="1.6" height="10" fill="#565656"/><rect x="1337.7" y="820" width="2.4" height="15" fill="#c8f6f8"/><rect x="1392.2" y="825" width="1.6" height="10" fill="#565656"/><rect x="1446.5" y="825" width="1.6" height="10" fill="#565656"/><rect x="1500.9" y="825" width="1.6" height="10" fill="#565656"/><rect x="1555.2" y="825" width="1.6" height="10" fill="#565656"/><rect x="1609.3" y="820" width="2.4" height="15" fill="#c8f6f8"/><rect x="1663.8" y="825" width="1.6" height="10" fill="#565656"/><rect x="1718.1" y="825" width="1.6" height="10" fill="#565656"/><rect x="1772.5" y="825" width="1.6" height="10" fill="#565656"/><rect x="1826.8" y="825" width="1.6" height="10" fill="#565656"/><rect x="1880.9" y="820" width="2.4" height="15" fill="#c8f6f8"/><rect x="1935.4" y="825" width="1.6" height="10" fill="#565656"/><rect x="1989.7" y="825" width="1.6" height="10" fill="#565656"/><rect x="2044.1" y="825" width="1.6" height="10" fill="#565656"/><rect x="2098.4" y="825" width="1.6" height="10" fill="#565656"/><rect x="2152.5" y="820" width="2.4" height="15" fill="#c8f6f8"/><rect x="2207.0" y="825" width="1.6" height="10" fill="#565656"/><rect x="2261.3" y="825" width="1.6" height="10" fill="#565656"/><rect x="2315.7" y="825" width="1.6" height="10" fill="#565656"/><rect x="2370.0" y="825" width="1.6" height="10" fill="#565656"/><rect x="2424.1" y="820" width="2.4" height="15" fill="#c8f6f8"/></svg>
<div class="t" style="left:792.0px;top:804.8px;font-size:11px;color:#a6eef2;line-height:16px;">0</div>
<div class="t" style="left:1063.0px;top:804.8px;font-size:11px;color:#a6eef2;line-height:16px;">5</div>
<div class="t" style="left:1331.5px;top:804.8px;font-size:11px;color:#a6eef2;line-height:16px;">10</div>
<div class="t" style="left:1603.1px;top:804.8px;font-size:11px;color:#a6eef2;line-height:16px;">15</div>
<div class="t" style="left:1874.7px;top:804.8px;font-size:11px;color:#a6eef2;line-height:16px;">20</div>
<div class="t" style="left:2146.3px;top:804.8px;font-size:11px;color:#a6eef2;line-height:16px;">25</div>
<div class="t" style="left:2417.9px;top:804.8px;font-size:11px;color:#a6eef2;line-height:16px;">30</div>
<div style="left:784px;top:842px;width:1650px;height:80px;background:#6b5a33;"></div>
<div style="left:784px;top:842px;width:11px;height:80px;background:#77663a;"></div>
<div style="left:784px;top:922px;width:1650px;height:60px;background:#2f2f2f;"></div>
<div style="left:784px;top:922px;width:11px;height:60px;background:#3d3d3d;"></div>
<div style="left:786px;top:942px;width:1646px;height:1px;background:#353535;"></div>
<div style="left:786px;top:962px;width:1646px;height:1px;background:#353535;"></div>
<div style="left:534px;top:842px;width:250px;height:80px;background:#f7c22e;"></div>
<div style="left:534px;top:922px;width:250px;height:60px;background:#444444;"></div>
<svg style="left:558px;top:848px;color:#140c0c;" width="6" height="8"><use href="#tr"/></svg>
<svg style="left:568px;top:843px;color:#140c0c;" width="15" height="15"><use href="#ik"/></svg>
<div class="t" style="left:587.5px;top:844.0px;font-size:11px;color:#1a1010;line-height:16px;letter-spacing:-0.158px;">IK-Genesis 8 Female : Left Foot</div>
<svg style="left:558px;top:868px;color:#140c0c;" width="6" height="8"><use href="#tr"/></svg>
<svg style="left:568px;top:864px;color:#140c0c;--k:#f7c22e;" width="15" height="16"><use href="#cube"/></svg>
<div class="t" style="left:587.5px;top:864.0px;font-size:11px;color:#1a1010;line-height:16px;letter-spacing:0.002px;">Sphere (5)</div>
<svg style="left:548px;top:888px;color:#140c0c;" width="6" height="8"><use href="#tr"/></svg>
<div style="left:557px;top:884px;width:16px;height:16px;border-radius:8px;background:#080408"></div>
<div class="t" style="left:577.5px;top:884.0px;font-size:11px;color:#1a1010;line-height:16px;letter-spacing:-0.266px;">D-Former_1_Field</div>
<svg style="left:548px;top:908px;color:#140c0c;" width="6" height="8"><use href="#tr"/></svg>
<svg style="left:557px;top:904px;color:#140c0c;--k:#f7c22e;" width="16" height="16"><use href="#dbase"/></svg>
<div class="t" style="left:577.5px;top:904.0px;font-size:11px;color:#1a1010;line-height:16px;letter-spacing:-0.166px;">D-Former_1_Base</div>
<svg style="left:537px;top:929px;color:#78e8ec;" width="8" height="6"><use href="#td"/></svg>
<svg style="left:547px;top:924px;color:#6cc8cc;--k:#444444;" width="16" height="16"><use href="#fig"/></svg>
<div class="t" style="left:567px;top:924.0px;font-size:11px;color:#a2eaec;line-height:16px;letter-spacing:-0.204px;">Genesis 8 Female</div>
<svg style="left:548px;top:948px;color:#78e8ec;" width="6" height="8"><use href="#tr"/></svg>
<div class="t" style="left:557px;top:944.0px;font-size:11px;color:#a2eaec;line-height:16px;letter-spacing:-0.114px;">Properties</div>
<svg style="left:548px;top:968px;color:#78e8ec;" width="6" height="8"><use href="#tr"/></svg>
<svg style="left:556px;top:964px;color:#78e8ec;--k:#33494b;" width="16" height="16"><use href="#bone"/></svg>
<div class="t" style="left:577.5px;top:964.0px;font-size:11px;color:#a2eaec;line-height:16px;letter-spacing:-0.505px;">Hip</div>
<svg style="left:786px;top:806px;overflow:visible" width="1646" height="177" viewBox="786 806 1646 177"><rect x="797" y="851.5" width="1628.5" height="1.1" fill="#0c0a06"/><rect x="849.2" y="849.5" width="1.2" height="5" fill="#0c0a06"/><rect x="903.5" y="849.5" width="1.2" height="5" fill="#0c0a06"/><rect x="957.9" y="849.5" width="1.2" height="5" fill="#0c0a06"/><rect x="1012.2" y="849.5" width="1.2" height="5" fill="#0c0a06"/><rect x="1066.5" y="849.5" width="1.2" height="5" fill="#0c0a06"/><rect x="1120.8" y="849.5" width="1.2" height="5" fill="#0c0a06"/><rect x="1175.1" y="849.5" width="1.2" height="5" fill="#0c0a06"/><rect x="1229.5" y="849.5" width="1.2" height="5" fill="#0c0a06"/><rect x="1283.8" y="849.5" width="1.2" height="5" fill="#0c0a06"/><rect x="1338.1" y="849.5" width="1.2" height="5" fill="#0c0a06"/><rect x="1392.4" y="849.5" width="1.2" height="5" fill="#0c0a06"/><rect x="1446.7" y="849.5" width="1.2" height="5" fill="#0c0a06"/><rect x="1501.1" y="849.5" width="1.2" height="5" fill="#0c0a06"/><rect x="1555.4" y="849.5" width="1.2" height="5" fill="#0c0a06"/><rect x="1609.7" y="849.5" width="1.2" height="5" fill="#0c0a06"/><rect x="1664.0" y="849.5" width="1.2" height="5" fill="#0c0a06"/><rect x="1718.3" y="849.5" width="1.2" height="5" fill="#0c0a06"/><rect x="1772.7" y="849.5" width="1.2" height="5" fill="#0c0a06"/><rect x="1827.0" y="849.5" width="1.2" height="5" fill="#0c0a06"/><rect x="1881.3" y="849.5" width="1.2" height="5" fill="#0c0a06"/><rect x="1935.6" y="849.5" width="1.2" height="5" fill="#0c0a06"/><rect x="1989.9" y="849.5" width="1.2" height="5" fill="#0c0a06"/><rect x="2044.3" y="849.5" width="1.2" height="5" fill="#0c0a06"/><rect x="2098.6" y="849.5" width="1.2" height="5" fill="#0c0a06"/><rect x="2152.9" y="849.5" width="1.2" height="5" fill="#0c0a06"/><rect x="2207.2" y="849.5" width="1.2" height="5" fill="#0c0a06"/><rect x="2261.5" y="849.5" width="1.2" height="5" fill="#0c0a06"/><rect x="2315.9" y="849.5" width="1.2" height="5" fill="#0c0a06"/><rect x="2370.2" y="849.5" width="1.2" height="5" fill="#0c0a06"/><rect x="2424.5" y="848.5" width="1.2" height="7" fill="#0c0a06"/><path d="M795.500 849L799.500 857H791.500Z" fill="#0a0806"/><rect x="797" y="871.5" width="1628.5" height="1.1" fill="#0c0a06"/><rect x="849.2" y="869.5" width="1.2" height="5" fill="#0c0a06"/><rect x="903.5" y="869.5" width="1.2" height="5" fill="#0c0a06"/><rect x="957.9" y="869.5" width="1.2" height="5" fill="#0c0a06"/><rect x="1012.2" y="869.5" width="1.2" height="5" fill="#0c0a06"/><rect x="1066.5" y="869.5" width="1.2" height="5" fill="#0c0a06"/><rect x="1120.8" y="869.5" width="1.2" height="5" fill="#0c0a06"/><rect x="1175.1" y="869.5" width="1.2" height="5" fill="#0c0a06"/><rect x="1229.5" y="869.5" width="1.2" height="5" fill="#0c0a06"/><rect x="1283.8" y="869.5" width="1.2" height="5" fill="#0c0a06"/><rect x="1338.1" y="869.5" width="1.2" height="5" fill="#0c0a06"/><rect x="1392.4" y="869.5" width="1.2" height="5" fill="#0c0a06"/><rect x="1446.7" y="869.5" width="1.2" height="5" fill="#0c0a06"/><rect x="1501.1" y="869.5" width="1.2" height="5" fill="#0c0a06"/><rect x="1555.4" y="869.5" width="1.2" height="5" fill="#0c0a06"/><rect x="1609.7" y="869.5" width="1.2" height="5" fill="#0c0a06"/><rect x="1664.0" y="869.5" width="1.2" height="5" fill="#0c0a06"/><rect x="1718.3" y="869.5" width="1.2" height="5" fill="#0c0a06"/><rect x="1772.7" y="869.5" width="1.2" height="5" fill="#0c0a06"/><rect x="1827.0" y="869.5" width="1.2" height="5" fill="#0c0a06"/><rect x="1881.3" y="869.5" width="1.2" height="5" fill="#0c0a06"/><rect x="1935.6" y="869.5" width="1.2" height="5" fill="#0c0a06"/><rect x="1989.9" y="869.5" width="1.2" height="5" fill="#0c0a06"/><rect x="2044.3" y="869.5" width="1.2" height="5" fill="#0c0a06"/><rect x="2098.6" y="869.5" width="1.2" height="5" fill="#0c0a06"/><rect x="2152.9" y="869.5" width="1.2" height="5" fill="#0c0a06"/><rect x="2207.2" y="869.5" width="1.2" height="5" fill="#0c0a06"/><rect x="2261.5" y="869.5" width="1.2" height="5" fill="#0c0a06"/><rect x="2315.9" y="869.5" width="1.2" height="5" fill="#0c0a06"/><rect x="2370.2" y="869.5" width="1.2" height="5" fill="#0c0a06"/><rect x="2424.5" y="868.5" width="1.2" height="7" fill="#0c0a06"/><path d="M795.500 869L799.500 877H791.500Z" fill="#0a0806"/><rect x="797" y="891.5" width="1628.5" height="1.1" fill="#0c0a06"/><rect x="849.2" y="889.5" width="1.2" height="5" fill="#0c0a06"/><rect x="903.5" y="889.5" width="1.2" height="5" fill="#0c0a06"/><rect x="957.9" y="889.5" width="1.2" height="5" fill="#0c0a06"/><rect x="1012.2" y="889.5" width="1.2" height="5" fill="#0c0a06"/><rect x="1066.5" y="889.5" width="1.2" height="5" fill="#0c0a06"/><rect x="1120.8" y="889.5" width="1.2" height="5" fill="#0c0a06"/><rect x="1175.1" y="889.5" width="1.2" height="5" fill="#0c0a06"/><rect x="1229.5" y="889.5" width="1.2" height="5" fill="#0c0a06"/><rect x="1283.8" y="889.5" width="1.2" height="5" fill="#0c0a06"/><rect x="1338.1" y="889.5" width="1.2" height="5" fill="#0c0a06"/><rect x="1392.4" y="889.5" width="1.2" height="5" fill="#0c0a06"/><rect x="1446.7" y="889.5" width="1.2" height="5" fill="#0c0a06"/><rect x="1501.1" y="889.5" width="1.2" height="5" fill="#0c0a06"/><rect x="1555.4" y="889.5" width="1.2" height="5" fill="#0c0a06"/><rect x="1609.7" y="889.5" width="1.2" height="5" fill="#0c0a06"/><rect x="1664.0" y="889.5" width="1.2" height="5" fill="#0c0a06"/><rect x="1718.3" y="889.5" width="1.2" height="5" fill="#0c0a06"/><rect x="1772.7" y="889.5" width="1.2" height="5" fill="#0c0a06"/><rect x="1827.0" y="889.5" width="1.2" height="5" fill="#0c0a06"/><rect x="1881.3" y="889.5" width="1.2" height="5" fill="#0c0a06"/><rect x="1935.6" y="889.5" width="1.2" height="5" fill="#0c0a06"/><rect x="1989.9" y="889.5" width="1.2" height="5" fill="#0c0a06"/><rect x="2044.3" y="889.5" width="1.2" height="5" fill="#0c0a06"/><rect x="2098.6" y="889.5" width="1.2" height="5" fill="#0c0a06"/><rect x="2152.9" y="889.5" width="1.2" height="5" fill="#0c0a06"/><rect x="2207.2" y="889.5" width="1.2" height="5" fill="#0c0a06"/><rect x="2261.5" y="889.5" width="1.2" height="5" fill="#0c0a06"/><rect x="2315.9" y="889.5" width="1.2" height="5" fill="#0c0a06"/><rect x="2370.2" y="889.5" width="1.2" height="5" fill="#0c0a06"/><rect x="2424.5" y="888.5" width="1.2" height="7" fill="#0c0a06"/><path d="M795.500 889L799.500 897H791.500Z" fill="#0a0806"/><rect x="797" y="911.5" width="1628.5" height="1.1" fill="#0c0a06"/><rect x="849.2" y="909.5" width="1.2" height="5" fill="#0c0a06"/><rect x="903.5" y="909.5" width="1.2" height="5" fill="#0c0a06"/><rect x="957.9" y="909.5" width="1.2" height="5" fill="#0c0a06"/><rect x="1012.2" y="909.5" width="1.2" height="5" fill="#0c0a06"/><rect x="1066.5" y="909.5" width="1.2" height="5" fill="#0c0a06"/><rect x="1120.8" y="909.5" width="1.2" height="5" fill="#0c0a06"/><rect x="1175.1" y="909.5" width="1.2" height="5" fill="#0c0a06"/><rect x="1229.5" y="909.5" width="1.2" height="5" fill="#0c0a06"/><rect x="1283.8" y="909.5" width="1.2" height="5" fill="#0c0a06"/><rect x="1338.1" y="909.5" width="1.2" height="5" fill="#0c0a06"/><rect x="1392.4" y="909.5" width="1.2" height="5" fill="#0c0a06"/><rect x="1446.7" y="909.5" width="1.2" height="5" fill="#0c0a06"/><rect x="1501.1" y="909.5" width="1.2" height="5" fill="#0c0a06"/><rect x="1555.4" y="909.5" width="1.2" height="5" fill="#0c0a06"/><rect x="1609.7" y="909.5" width="1.2" height="5" fill="#0c0a06"/><rect x="1664.0" y="909.5" width="1.2" height="5" fill="#0c0a06"/><rect x="1718.3" y="909.5" width="1.2" height="5" fill="#0c0a06"/><rect x="1772.7" y="909.5" width="1.2" height="5" fill="#0c0a06"/><rect x="1827.0" y="909.5" width="1.2" height="5" fill="#0c0a06"/><rect x="1881.3" y="909.5" width="1.2" height="5" fill="#0c0a06"/><rect x="1935.6" y="909.5" width="1.2" height="5" fill="#0c0a06"/><rect x="1989.9" y="909.5" width="1.2" height="5" fill="#0c0a06"/><rect x="2044.3" y="909.5" width="1.2" height="5" fill="#0c0a06"/><rect x="2098.6" y="909.5" width="1.2" height="5" fill="#0c0a06"/><rect x="2152.9" y="909.5" width="1.2" height="5" fill="#0c0a06"/><rect x="2207.2" y="909.5" width="1.2" height="5" fill="#0c0a06"/><rect x="2261.5" y="909.5" width="1.2" height="5" fill="#0c0a06"/><rect x="2315.9" y="909.5" width="1.2" height="5" fill="#0c0a06"/><rect x="2370.2" y="909.5" width="1.2" height="5" fill="#0c0a06"/><rect x="2424.5" y="908.5" width="1.2" height="7" fill="#0c0a06"/><path d="M795.500 909L799.500 917H791.500Z" fill="#0a0806"/><path d="M795.500 949L799.500 957H791.500Z" fill="#0a0806"/><path d="M795.500 969L799.500 977H791.500Z" fill="#0a0806"/><path d="M795.500 833V981" stroke="#bff4f4" stroke-width="1.300" stroke-dasharray="14 6"/><path d="M795.500 922V946" stroke="#8fe8ea" stroke-width="1.300"/><path d="M783.500 821H807.500L795.500 833.500Z" fill="#f7c22e"/><rect x="794.500" y="819.500" width="2" height="2" fill="#f7c22e"/><path d="M792 841L795.500 835L799 841Z" fill="#0a0806"/></svg>
<div style="left:2434px;top:806px;width:6px;height:176px;background:#1c1c1c;"></div>
<div style="left:2435px;top:883px;width:5px;height:70px;background:#555;"></div>
<div style="left:2435px;top:953px;width:5px;height:28px;background:#0a0a0a;"></div>
<div style="left:533px;top:982px;width:1907px;height:1px;background:#1a1a1a;"></div>
<div style="left:533px;top:983px;width:1907px;height:6px;background:#484848;"></div>
<div style="left:1480px;top:983px;width:20px;height:6px;background:#0a0a0a;"></div>
<div style="left:530px;top:989px;width:1910px;height:13px;background:#0c0c0c;"></div>
<div class="t" style="left:553.5px;top:991.3px;font-size:11px;color:#a6eef2;line-height:16px;">0</div>
<div class="t" style="left:2412.5px;top:991.3px;font-size:11px;color:#a6eef2;line-height:16px;">30</div>
</body></html>
